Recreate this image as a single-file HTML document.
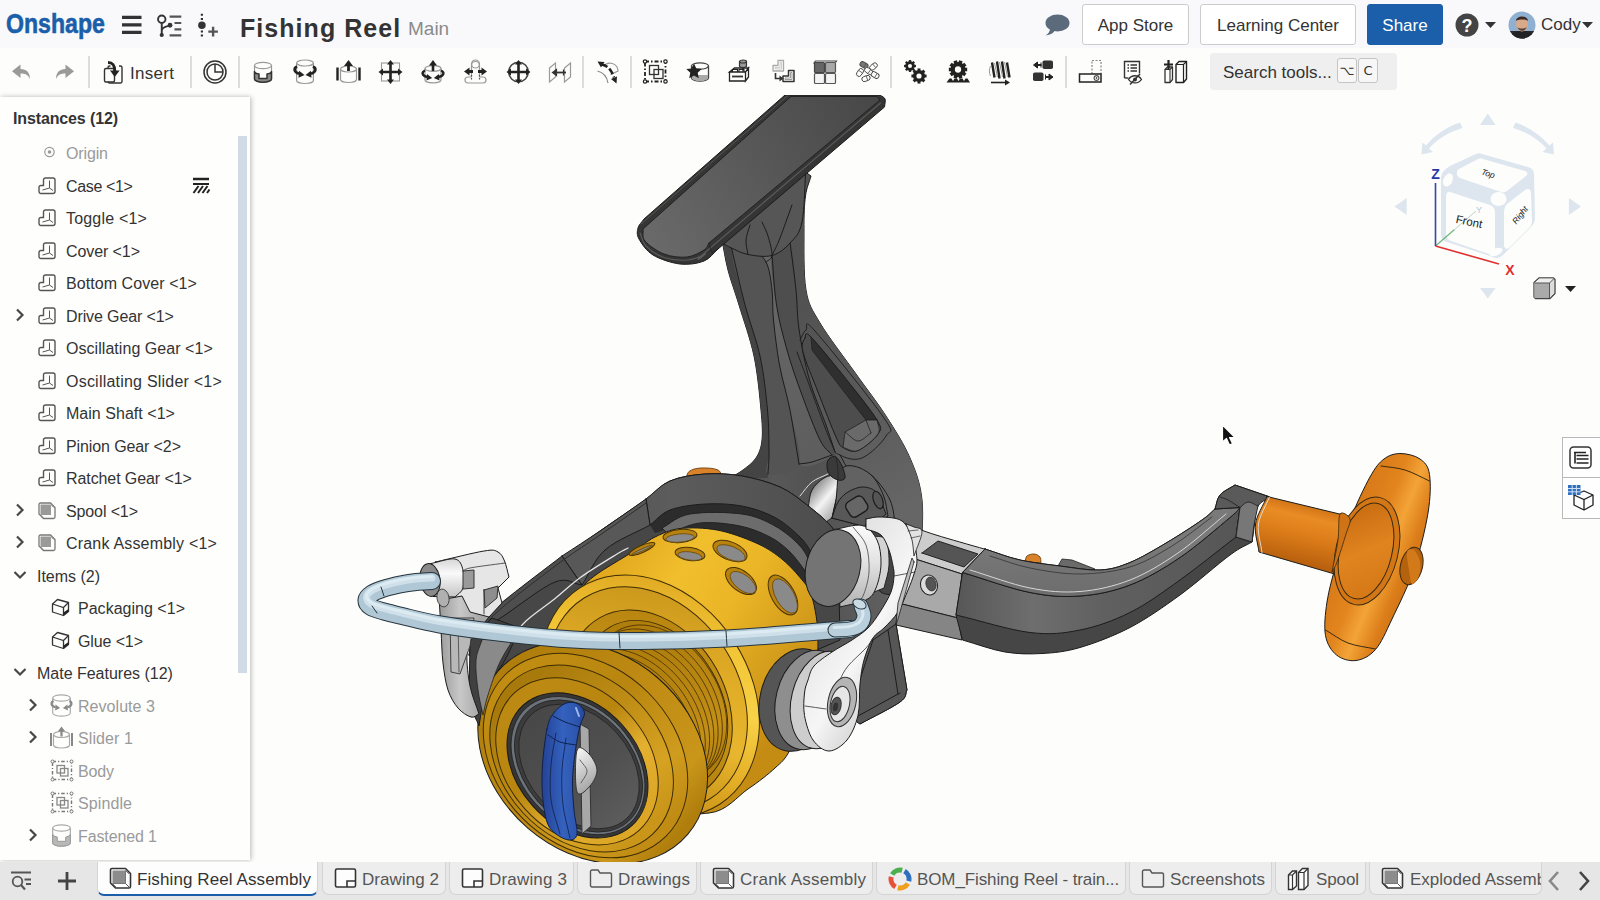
<!DOCTYPE html>
<html lang="en">
<head>
<meta charset="utf-8">
<title>Fishing Reel | Onshape</title>
<style>
*{box-sizing:border-box;margin:0;padding:0}
html,body{width:1600px;height:900px;overflow:hidden;background:#fdfdfb;font-family:"Liberation Sans",sans-serif;color:#333}
.abs{position:absolute}
#top{position:absolute;left:0;top:0;width:1600px;height:48px;background:#f9f9fb}
#tools{position:absolute;left:0;top:48px;width:1600px;height:47px;background:#fdfdfc}
#view{position:absolute;left:0;top:95px;width:1600px;height:767px;background:#fdfdfb;overflow:hidden}
#panel{position:absolute;left:0;top:97px;width:250px;height:763px;background:#fefefd;box-shadow:1px 0 5px rgba(0,0,0,.28);overflow:hidden}
#tabs{position:absolute;left:0;top:862px;width:1600px;height:38px;background:#e6e6e6}
.logo{position:absolute;left:6px;top:6px;font-size:28px;font-weight:bold;color:#1b5faa;letter-spacing:0;transform:scaleX(.825);transform-origin:0 0;line-height:36px;-webkit-text-stroke:.6px #1b5faa}
.title{position:absolute;left:240px;top:10px;font-size:25px;font-weight:bold;color:#333;line-height:36px;letter-spacing:1.05px;white-space:nowrap}
.branch{position:absolute;left:408px;top:15px;font-size:19px;color:#8a8a8a;line-height:28px}
.btn{position:absolute;top:4px;height:41px;border:1px solid #ccc;border-radius:3px;background:#fff;font-size:17px;line-height:41px;text-align:center;color:#333}
.btn.share{background:#1b5faa;border-color:#1b5faa;color:#fff}
.sep{position:absolute;top:8px;width:2px;height:32px;background:#dcdcdc}
.ti{position:absolute;top:58px;width:28px;height:28px}
.row{position:absolute;left:0;height:32px;line-height:32px;font-size:16px;color:#333;white-space:nowrap}
.row.dim{color:#9a9a9a}
.tab{position:absolute;top:863px;height:33px;background:#ededed;border:1px solid #d4d4d4;border-top:none;border-radius:0 0 7px 7px;font-size:17px;line-height:35px;color:#555;white-space:nowrap;overflow:hidden}
.tab.act{background:#fdfdfd;color:#333;border-bottom:2px solid #1b5faa;height:34px}
.tab span{position:absolute;top:0}
#tabitems{position:absolute;left:0;top:862px;width:1600px;height:38px}
#tabitems .tab{top:0}
#tabitems svg.abs{position:absolute}
.kbd{top:10px;width:20px;height:25px;border:1px solid #c4c4c4;border-radius:3px;background:#f7f7f7;font-size:13px;line-height:24px;text-align:center;color:#333;font-family:"DejaVu Sans","Liberation Sans",sans-serif}
</style>
</head>
<body>
<div id="view"><svg width="1600" height="900" viewBox="0 0 1600 900" style="position:absolute;left:0;top:-95px"><defs><linearGradient id="gFoot" gradientUnits="userSpaceOnUse" x1="650" y1="250" x2="880" y2="100"><stop offset="0" stop-color="#6a6a6a"/><stop offset="0.5" stop-color="#585858"/><stop offset="1" stop-color="#474747"/></linearGradient><linearGradient id="gStem" gradientUnits="userSpaceOnUse" x1="730" y1="0" x2="900" y2="0"><stop offset="0" stop-color="#444"/><stop offset="0.25" stop-color="#585858"/><stop offset="0.5" stop-color="#525252"/><stop offset="1" stop-color="#626262"/></linearGradient><linearGradient id="gArmTop" gradientUnits="userSpaceOnUse" x1="0" y1="540" x2="0" y2="600"><stop offset="0" stop-color="#7a7a7a"/><stop offset="1" stop-color="#6c6c6c"/></linearGradient><linearGradient id="gArmFront" gradientUnits="userSpaceOnUse" x1="960" y1="0" x2="1250" y2="0"><stop offset="0" stop-color="#585858"/><stop offset="0.25" stop-color="#6e6e6e"/><stop offset="0.5" stop-color="#606060"/><stop offset="1" stop-color="#555"/></linearGradient><linearGradient id="gOrCyl" gradientUnits="userSpaceOnUse" x1="1300" y1="500" x2="1286" y2="560"><stop offset="0" stop-color="#c86c12"/><stop offset="0.25" stop-color="#ea8c24"/><stop offset="0.6" stop-color="#d97a18"/><stop offset="1" stop-color="#b9600e"/></linearGradient><linearGradient id="gKnob" gradientUnits="userSpaceOnUse" x1="1330" y1="520" x2="1430" y2="560"><stop offset="0" stop-color="#cf7214"/><stop offset="0.45" stop-color="#e2851e"/><stop offset="0.62" stop-color="#f3a437"/><stop offset="0.8" stop-color="#dc7e1a"/><stop offset="1" stop-color="#c56a10"/></linearGradient><linearGradient id="gFacetMid" gradientUnits="userSpaceOnUse" x1="760" y1="300" x2="800" y2="460"><stop offset="0" stop-color="#666"/><stop offset="1" stop-color="#5e5e5e"/></linearGradient><linearGradient id="gFacetR" gradientUnits="userSpaceOnUse" x1="800" y1="300" x2="920" y2="500"><stop offset="0" stop-color="#525252"/><stop offset="0.6" stop-color="#5c5c5c"/><stop offset="1" stop-color="#666"/></linearGradient><linearGradient id="gBulge" gradientUnits="userSpaceOnUse" x1="810" y1="490" x2="840" y2="515"><stop offset="0" stop-color="#8a8a8a"/><stop offset="0.45" stop-color="#f4f4f4"/><stop offset="1" stop-color="#9a9a9a"/></linearGradient><linearGradient id="gKn2" gradientUnits="userSpaceOnUse" x1="1345" y1="520" x2="1390" y2="580"><stop offset="0" stop-color="#cc7014"/><stop offset="0.5" stop-color="#e08420"/><stop offset="1" stop-color="#d67a18"/></linearGradient><linearGradient id="gRim" gradientUnits="userSpaceOnUse" x1="560" y1="0" x2="840" y2="0"><stop offset="0" stop-color="#505050"/><stop offset="0.4" stop-color="#5c5c5c"/><stop offset="1" stop-color="#4c4c4c"/></linearGradient><linearGradient id="gSkirt" gradientUnits="userSpaceOnUse" x1="600" y1="560" x2="800" y2="700"><stop offset="0" stop-color="#e0a51c"/><stop offset="0.3" stop-color="#f1bf2e"/><stop offset="0.55" stop-color="#eab526"/><stop offset="1" stop-color="#c58c14"/></linearGradient><linearGradient id="gGroove" gradientUnits="userSpaceOnUse" x1="620" y1="640" x2="740" y2="740"><stop offset="0" stop-color="#b07e0c"/><stop offset="0.5" stop-color="#c39018"/><stop offset="1" stop-color="#9e6e06"/></linearGradient><linearGradient id="gRimA" gradientUnits="userSpaceOnUse" x1="560" y1="580" x2="770" y2="760"><stop offset="0" stop-color="#d9a01c"/><stop offset="0.3" stop-color="#f2c435"/><stop offset="0.55" stop-color="#f8d248"/><stop offset="0.8" stop-color="#e2ac24"/><stop offset="1" stop-color="#bd8612"/></linearGradient><linearGradient id="gFaceB" gradientUnits="userSpaceOnUse" x1="560" y1="600" x2="750" y2="760"><stop offset="0" stop-color="#c8941a"/><stop offset="0.4" stop-color="#e0ac26"/><stop offset="0.7" stop-color="#e8b62e"/><stop offset="1" stop-color="#c08a12"/></linearGradient><linearGradient id="gFaceC" gradientUnits="userSpaceOnUse" x1="580" y1="620" x2="735" y2="770"><stop offset="0" stop-color="#b5820e"/><stop offset="0.5" stop-color="#c9961a"/><stop offset="1" stop-color="#a87608"/></linearGradient><linearGradient id="gF0" gradientUnits="userSpaceOnUse" x1="480" y1="0" x2="710" y2="0"><stop offset="0" stop-color="#b07e0c"/><stop offset="0.5" stop-color="#c08c14"/><stop offset="0.85" stop-color="#c9961a"/><stop offset="1" stop-color="#b07e0c"/></linearGradient><linearGradient id="gF1" gradientUnits="userSpaceOnUse" x1="484" y1="0" x2="690" y2="0"><stop offset="0" stop-color="#c08c12"/><stop offset="0.4" stop-color="#b8860f"/><stop offset="0.8" stop-color="#d09c1e"/><stop offset="1" stop-color="#c08c14"/></linearGradient><linearGradient id="gF2" gradientUnits="userSpaceOnUse" x1="490" y1="0" x2="675" y2="0"><stop offset="0" stop-color="#a87a0c"/><stop offset="0.45" stop-color="#c08e16"/><stop offset="0.8" stop-color="#d6a222"/><stop offset="1" stop-color="#c9961a"/></linearGradient><linearGradient id="gF3" gradientUnits="userSpaceOnUse" x1="497" y1="0" x2="658" y2="0"><stop offset="0" stop-color="#bc8a12"/><stop offset="0.4" stop-color="#b8860f"/><stop offset="0.7" stop-color="#e4b030"/><stop offset="1" stop-color="#dca626"/></linearGradient><linearGradient id="gDisc" gradientUnits="userSpaceOnUse" x1="510" y1="0" x2="650" y2="0"><stop offset="0" stop-color="#484848"/><stop offset="0.6" stop-color="#505050"/><stop offset="1" stop-color="#5c5c5c"/></linearGradient><linearGradient id="gBlue" gradientUnits="userSpaceOnUse" x1="545" y1="0" x2="585" y2="0"><stop offset="0" stop-color="#26469a"/><stop offset="0.45" stop-color="#3462be"/><stop offset="0.8" stop-color="#2d55ae"/><stop offset="1" stop-color="#24449a"/></linearGradient><linearGradient id="gWing" gradientUnits="userSpaceOnUse" x1="575" y1="755" x2="598" y2="785"><stop offset="0" stop-color="#f0f0f0"/><stop offset="1" stop-color="#a0a0a0"/></linearGradient><linearGradient id="gLArm" gradientUnits="userSpaceOnUse" x1="440" y1="0" x2="480" y2="0"><stop offset="0" stop-color="#9c9c9c"/><stop offset="0.5" stop-color="#c8c8c8"/><stop offset="1" stop-color="#a8a8a8"/></linearGradient><linearGradient id="gNub" gradientUnits="userSpaceOnUse" x1="0" y1="560" x2="0" y2="598"><stop offset="0" stop-color="#d8d8d8"/><stop offset="0.35" stop-color="#fafafa"/><stop offset="1" stop-color="#c2c2c2"/></linearGradient><linearGradient id="gRArm" gradientUnits="userSpaceOnUse" x1="800" y1="640" x2="900" y2="700"><stop offset="0" stop-color="#e4e4e4"/><stop offset="0.5" stop-color="#f6f6f6"/><stop offset="1" stop-color="#c8c8c8"/></linearGradient><linearGradient id="gRoll" gradientUnits="userSpaceOnUse" x1="0" y1="525" x2="0" y2="605"><stop offset="0" stop-color="#fbfbfb"/><stop offset="0.45" stop-color="#e4e4e4"/><stop offset="1" stop-color="#b4b4b4"/></linearGradient></defs><path d="M722 240.0C724 250 725.2 259.2 728 270.0C730.8 280.8 734.7 290.7 739 305.0C743.3 319.3 750.3 338.5 754 356.0C757.7 373.5 759.7 396 761 410.0C762.3 424 762.8 432 762 440.0C761.2 448 759.2 453 756 458.0C752.8 463 747.3 466.7 743 470.0C738.7 473.3 734.3 475.3 730 478.0L700 520.0L760 640.0L860 724.0C873.3 716.7 892.2 707.7 900 702.0C907.8 696.3 904.7 694 907 690.0L896 624.0L921 560.0C921.3 540 923.8 517 922 500.0C920.2 483 916 472 910 458.0C904 444 895 430 886 416.0C877 402 867 389.5 856 374.0C845 358.5 828.3 337 820 323.0C811.7 309 808.7 305.5 806 290.0C803.3 274.5 804.1 245.7 804 230.0C803.9 214.3 804.3 205 805.5 196.0C806.7 187 809.2 182.7 811 176.0L800 168.0L722 240.0Z" fill="url(#gStem)" stroke="#1c1c1c" stroke-width="1" stroke-linejoin="round" stroke-linecap="round" />
<path d="M790 242.0C788.5 262 794.5 275.5 796 290.0C797.5 304.5 796.8 314 799 329.0C801.2 344 805 364 809.5 380.0C814 396 821.8 413 826 425.0C830.2 437 832.7 444.5 835 452.0C837.3 459.5 838.3 464 840 470.0L896 624.0L921 560.0C921.3 540 923.8 517 922 500.0C920.2 483 916 472 910 458.0C904 444 895 430 886 416.0C877 402 867 389.5 856 374.0C845 358.5 828.3 337 820 323.0C811.7 309 808.7 305.5 806 290.0C803.3 274.5 804.2 250 804 230.0C803.8 210 807.3 168 805 170.0C802.7 172 791.5 222 790 242.0Z" fill="url(#gFacetR)" stroke="none" stroke-width="0" stroke-linejoin="round" stroke-linecap="round" />
<path d="M748 243.5C747 244.6 762 254.2 766 262.0C770 269.8 770.8 280.3 772 290.0C773.2 299.7 772.2 307.5 773.5 320.0C774.8 332.5 776.8 350 779.5 365.0C782.2 380 786.8 393.5 790 410.0C793.2 426.5 792 456.5 799 464.0C806 471.5 828.5 459 832 455.0C835.5 451 825 450 820 440.0C815 430 807.5 410 802 395.0C796.5 380 791.2 365 787 350.0C782.8 335 779 320.8 776.5 305.0C774 289.2 776.8 265.8 772 255.5C767.2 245.2 749 242.4 748 243.5Z" fill="url(#gFacetMid)" stroke="none" stroke-width="0" stroke-linejoin="round" stroke-linecap="round" />
<path d="M722 240.0C724 250 725.2 259.2 728 270.0C730.8 280.8 734.7 290.7 739 305.0C743.3 319.3 750.3 338.5 754 356.0C757.7 373.5 759.7 396 761 410.0C762.3 424 762.8 432 762 440.0C761.2 448 759.2 453 756 458.0C752.8 463 747.3 466.7 743 470.0C738.7 473.3 734.3 475.3 730 478.0L768 478.0C768 476.7 767.8 478.3 768 474.0C768.2 469.7 769.1 462.7 769 452.0C768.9 441.3 769 426 767.5 410.0C766 394 763.8 373.5 760 356.0C756.2 338.5 749.8 323 745 305.0C740.2 287 735.3 258.8 731.5 248.0C727.7 237.2 725.2 242.7 722 240.0Z" fill="#444" stroke="none" stroke-width="0" stroke-linejoin="round" stroke-linecap="round" />
<path d="M731.5 248.0C731 258.2 740.2 287 745 305.0C749.8 323 756.2 338.5 760 356.0C763.8 373.5 766 394 767.5 410.0C769 426 768.9 441.3 769 452.0C769.1 462.7 763 472 768 474.0C773 476 795.3 474.7 799 464.0C802.7 453.3 793.2 426.5 790 410.0C786.8 393.5 782.2 380 779.5 365.0C776.8 350 774.8 332.5 773.5 320.0C772.2 307.5 773.2 299.7 772 290.0C770.8 280.3 770 269.8 766 262.0C762 254.2 753.8 245.8 748 243.5C742.2 241.2 732 237.8 731.5 248.0Z" fill="#545454" stroke="none" stroke-width="0" stroke-linejoin="round" stroke-linecap="round" />
<path d="M772 255.5C769.8 266 774 289.2 776.5 305.0C779 320.8 782.8 335 787 350.0C791.2 365 796.5 380 802 395.0C807.5 410 815 430 820 440.0C825 450 829.5 453 832 455.0C834.5 457 836 457 835 452.0C834 447 830.2 437 826 425.0C821.8 413 814 396 809.5 380.0C805 364 801.2 344 799 329.0C796.8 314 797.5 304.5 796 290.0C794.5 275.5 794 247.8 790 242.0C786 236.2 774.2 245 772 255.5Z" fill="#4e4e4e" stroke="none" stroke-width="0" stroke-linejoin="round" stroke-linecap="round" />
<path d="M731.5 248.0C736 267 740.2 287 745 305.0C749.8 323 756.2 338.5 760 356.0C763.8 373.5 766 394 767.5 410.0C769 426 768.9 441.3 769 452.0C769.1 462.7 768.3 466.7 768 474.0" fill="none" stroke="#1c1c1c" stroke-width="1" stroke-linejoin="round" stroke-linecap="round" />
<path d="M748 243.5C754 249.7 762 254.2 766 262.0C770 269.8 770.8 280.3 772 290.0C773.2 299.7 772.2 307.5 773.5 320.0C774.8 332.5 776.8 350 779.5 365.0C782.2 380 786.8 393.5 790 410.0C793.2 426.5 796 446 799 464.0" fill="none" stroke="#1c1c1c" stroke-width="1" stroke-linejoin="round" stroke-linecap="round" />
<path d="M772 255.5C773.5 272 774 289.2 776.5 305.0C779 320.8 782.8 335 787 350.0C791.2 365 796.5 380 802 395.0C807.5 410 815 430 820 440.0C825 450 828 450 832 455.0" fill="none" stroke="#1c1c1c" stroke-width="1" stroke-linejoin="round" stroke-linecap="round" />
<path d="M790 242.0C792 258 794.5 275.5 796 290.0C797.5 304.5 796.8 314 799 329.0C801.2 344 805 364 809.5 380.0C814 396 821.8 413 826 425.0C830.2 437 832 443 835 452.0" fill="none" stroke="#1c1c1c" stroke-width="1" stroke-linejoin="round" stroke-linecap="round" />
<path d="M722 243.0C725.2 244.7 727.2 246.1 731.5 248.0C735.8 249.9 741.2 253.2 748 254.5C754.8 255.8 765 257.4 772 255.5C779 253.6 785 248.6 790 243.0C795 237.4 799.3 235 802 222.0C804.7 209 804.7 184 806 165.0L716 240.0L722 243.0Z" fill="#565656" stroke="#1c1c1c" stroke-width="1" stroke-linejoin="round" stroke-linecap="round" />
<path d="M748 254.5C747.3 249.7 745.7 244.9 746 240.0C746.3 235.1 748.7 230 750 225.0" fill="none" stroke="#1c1c1c" stroke-width="1" stroke-linejoin="round" stroke-linecap="round" />
<path d="M766 262.0C768 259.8 771.7 259.8 772 255.5C772.3 251.2 769.7 241.6 768 236.0C766.3 230.4 764 226.7 762 222.0" fill="none" stroke="#1c1c1c" stroke-width="1" stroke-linejoin="round" stroke-linecap="round" />
<path d="M772 255.5C774.7 249.7 776.7 246.4 780 238.0C783.3 229.6 788 216 792 205.0" fill="none" stroke="#1c1c1c" stroke-width="1" stroke-linejoin="round" stroke-linecap="round" />
<path d="M805 338.0C806.3 335.5 804.2 330.2 811 337.0C817.8 343.8 835 365.2 846 379.0C857 392.8 871.7 410.8 877 420.0C882.3 429.2 881.2 428.9 878 434.0C874.8 439.1 863.8 448.2 858 450.5C852.2 452.8 846.7 449.8 843 447.5C839.3 445.2 840.2 446.2 836 437.0C831.8 427.8 823.5 406.2 818 392.0C812.5 377.8 805.2 361 803 352.0C800.8 343 803.7 340.5 805 338.0Z" fill="#4d4d4d" stroke="#1c1c1c" stroke-width="1" stroke-linejoin="round" stroke-linecap="round" />
<path d="M811 337.0C822.7 351 835 365.2 846 379.0C857 392.8 866.7 406.3 877 420.0L866 420.0C856.7 408 847 395.7 838 384.0C829 372.3 820.7 361.3 812 350.0L811 337.0Z" fill="#2f2f2f" stroke="#222" stroke-width="0.8" stroke-linejoin="round" stroke-linecap="round" />
<path d="M877 420.0C877.3 424.7 881.2 428.9 878 434.0C874.8 439.1 863.8 448.2 858 450.5C852.2 452.8 848 448.5 843 447.5L845 432.0L866 420.0L877 420.0Z" fill="#6a6a6a" stroke="#222" stroke-width="0.8" stroke-linejoin="round" stroke-linecap="round" />
<path d="M845 432.0C849.3 435 853.7 440.8 858 441.0C862.3 441.2 866.7 435.7 871 433.0" fill="none" stroke="#222" stroke-width="0.8" stroke-linejoin="round" stroke-linecap="round" />
<path d="M866 420.0C867.7 424.3 869.3 428.7 871 433.0" fill="none" stroke="#222" stroke-width="0.8" stroke-linejoin="round" stroke-linecap="round" />
<path d="M800 340.0C802 336.7 803.5 331.5 806 330.0C808.5 328.5 802 316.3 815 331.0C828 345.7 872.2 400.5 884 418.0C895.8 435.5 889.7 429.3 886 436.0C882.3 442.7 869.7 454.8 862 458.0C854.3 461.2 845.3 458 840 455.0C834.7 452 837.2 457.2 830 440.0C822.8 422.8 808 381.3 797 352.0" fill="none" stroke="#1c1c1c" stroke-width="0.9" stroke-linejoin="round" stroke-linecap="round" />
<path d="M799 464.0C803.3 463.3 806.5 463.5 812 462.0C817.5 460.5 825.3 457.3 832 455.0" fill="none" stroke="#1c1c1c" stroke-width="1" stroke-linejoin="round" stroke-linecap="round" />
<path d="M840 455.0C843.3 460 845 466.8 850 470.0C855 473.2 863.3 469 870 474.0C876.7 479 885.7 490.7 890 500.0C894.3 509.3 894 520 896 530.0" fill="none" stroke="#1c1c1c" stroke-width="1" stroke-linejoin="round" stroke-linecap="round" />
<path d="M808 508.0C809.3 502 809.3 495 812 490.0C814.7 485 819.7 480.7 824 478.0C828.3 475.3 833.3 475.3 838 474.0C839.3 476.7 842.3 477.7 842 482.0C841.7 486.3 837.7 494 836 500.0C834.3 506 833.3 512 832 518.0C828.7 519.3 826 523.7 822 522.0C818 520.3 812.7 512.7 808 508.0Z" fill="url(#gBulge)" stroke="#1c1c1c" stroke-width="1" stroke-linejoin="round" stroke-linecap="round" />
<path d="M838 474.0C840.7 471.3 842.3 467 846 466.0C849.7 465 855.3 466 860 468.0C864.7 470 870 473.2 874 478.0C878 482.8 881.7 490.7 884 497.0C886.3 503.3 886.7 509.7 888 516.0L870 528.0L832 518.0C833.3 512 835 507.3 836 500.0C837 492.7 837.3 482.7 838 474.0Z" fill="#626262" stroke="#1c1c1c" stroke-width="1" stroke-linejoin="round" stroke-linecap="round" />
<path d="M832 518.0C834 512.7 835.3 506.3 838 502.0C840.7 497.7 843.8 494.5 848 492.0C852.2 489.5 858.2 486.8 863 487.0C867.8 487.2 873.2 488.5 877 493.0C880.8 497.5 883 507 886 514.0L870 528.0L832 518.0Z" fill="#585858" stroke="#1c1c1c" stroke-width="1" stroke-linejoin="round" stroke-linecap="round" />
<rect x="847" y="498" width="20" height="17" rx="5" transform="rotate(-32 857 507)" fill="#666" stroke="#1c1c1c" stroke-width="1.4"/>
<ellipse cx="878" cy="500" rx="4.5" ry="9" transform="rotate(-20 878 500)" fill="#555" stroke="#1c1c1c" stroke-width="1.2" />
<path d="M830 458.0C831.5 456.8 834 455.7 836 457.0C838 458.3 840.5 462.5 842 466.0C843.5 469.5 845.7 475.7 845 478.0C844.3 480.3 840.7 480.7 838 480.0C835.3 479.3 830.8 476.7 829 474.0C827.2 471.3 826.8 466.7 827 464.0C827.2 461.3 828.5 459.2 830 458.0Z" fill="#3a3a3a" stroke="#1c1c1c" stroke-width="1" stroke-linejoin="round" stroke-linecap="round" />
<path d="M836 457.0C836.7 461.3 837.7 466.2 838 470.0C838.3 473.8 838 476.7 838 480.0" fill="none" stroke="#222" stroke-width="0.8" stroke-linejoin="round" stroke-linecap="round" />
<path d="M800 496.0C804 491.3 807.3 485.7 812 482.0C816.7 478.3 822.7 476.7 828 474.0" fill="none" stroke="#ddd" stroke-width="1" stroke-linejoin="round" stroke-linecap="round" />
<path d="M873 640.0L896 624.0L907 690.0C904.7 694 907.8 696.3 900 702.0C892.2 707.7 873.3 716.7 860 724.0L848 716.0L873 640.0Z" fill="#565656" stroke="#1c1c1c" stroke-width="1" stroke-linejoin="round" stroke-linecap="round" />
<path d="M888 630.0C891.3 651.3 894.7 672.7 898 694.0" fill="none" stroke="#1c1c1c" stroke-width="1" stroke-linejoin="round" stroke-linecap="round" />
<path d="M858 716.0C872 708.3 886 700.7 900 693.0" fill="none" stroke="#1c1c1c" stroke-width="1" stroke-linejoin="round" stroke-linecap="round" />
<path d="M785 95.0L880 95.0C881.7 96.3 884.2 97 885 99.0C885.8 101 884.7 104.3 884.5 107.0L718 249.0C713.3 253 710.3 258.5 704 261.0C697.7 263.5 688.5 265 680 264.0C671.5 263 659.8 259.2 653 255.0C646.2 250.8 641.5 243.5 639 239.0C636.5 234.5 637.2 231.3 638 228.0C638.8 224.7 642 222 644 219.0L785 95.0Z" fill="#353535" stroke="#1c1c1c" stroke-width="1" stroke-linejoin="round" stroke-linecap="round" />
<path d="M791 96.5L877 96.5L880 100.0L709 243.0C707.3 245.3 707.7 247.7 704 250.0C700.3 252.3 693.7 256.3 687 257.0C680.3 257.7 671 256.7 664 254.0C657 251.3 648.5 245.2 645 241.0C641.5 236.8 643.7 233 643 229.0L791 96.5Z" fill="url(#gFoot)" stroke="#222" stroke-width="1" stroke-linejoin="round" stroke-linecap="round" />
<path d="M641 224.0C690 181.2 739 138.3 788 95.5" fill="none" stroke="#555" stroke-width="1" stroke-linejoin="round" stroke-linecap="round" />
<path d="M880.5 103.0C824.3 150.8 741.2 221.3 712 246.5C682.8 271.7 709 251.8 705 254.0C701 256.2 694.8 259.4 688 260.0C681.2 260.6 671 259.8 664 257.5C657 255.2 650 250.1 646 246.0C642 241.9 642 237.3 640 233.0" fill="none" stroke="#5a5a5a" stroke-width="1.2" stroke-linejoin="round" stroke-linecap="round" />
<path d="M709 243.0C710 246 710.5 251 712 252.0C713.5 253 716 250 718 249.0" fill="none" stroke="#222" stroke-width="0.8" stroke-linejoin="round" stroke-linecap="round" />
<path d="M905 524.0C915.3 527.7 922.5 530.8 936 535.0C949.5 539.2 969.3 544.7 986 549.5L962 574.0L912 558.0L905 524.0Z" fill="#cdcdcd" stroke="#1c1c1c" stroke-width="1" stroke-linejoin="round" stroke-linecap="round" />
<path d="M922 553.0L938 541.0L978 554.0L964 567.0L922 553.0Z" fill="#555" stroke="#222" stroke-width="1" stroke-linejoin="round" stroke-linecap="round" />
<path d="M912 558.0L962 574.0L958 618.0L898 603.0L912 558.0Z" fill="#a9a9a9" stroke="#1c1c1c" stroke-width="1" stroke-linejoin="round" stroke-linecap="round" />
<path d="M898 603.0L958 618.0L962 640.0L896 625.0L898 603.0Z" fill="#858585" stroke="#1c1c1c" stroke-width="1" stroke-linejoin="round" stroke-linecap="round" />
<ellipse cx="929" cy="585" rx="8.5" ry="10" transform="rotate(-15 929 585)" fill="#dcdcdc" stroke="#222" stroke-width="1" />
<ellipse cx="931" cy="584" rx="5" ry="7" transform="rotate(-15 931 584)" fill="#555" stroke="#333" stroke-width="0.8" />
<path d="M1025 562.0C1025.7 560 1025.5 557.3 1027 556.0C1028.5 554.7 1031.8 553.8 1034 554.0C1036.2 554.2 1038.8 555.5 1040 557.0C1041.2 558.5 1040.7 561 1041 563.0L1025 562.0Z" fill="#d9822a" stroke="#5a3206" stroke-width="0.8" stroke-linejoin="round" stroke-linecap="round" />
<path d="M1058 566.0L1062 559.0L1072 560.0L1095 569.0L1092 571.0L1058 566.0Z" fill="#6a6a6a" stroke="#222" stroke-width="0.8" stroke-linejoin="round" stroke-linecap="round" />
<path d="M985 549.0C996.7 552.7 1007.5 557.2 1020 560.0C1032.5 562.8 1046.7 564.3 1060 566.0C1073.3 567.7 1088.3 570.6 1100 570.0C1111.7 569.4 1118.8 567.1 1130 562.5C1141.2 557.9 1155 549.6 1167 542.5C1179 535.4 1194 525.6 1202 520.0C1210 514.4 1210.7 512.7 1215 509.0C1216.7 504.3 1216.7 499 1220 495.0C1223.3 491 1230 488.3 1235 485.0L1270 497.0C1266 499.7 1261 497.5 1258 505.0C1255 512.5 1254 529.7 1252 542.0C1244.7 546.3 1242 546.2 1230 555.0C1218 563.8 1196.7 582.9 1180 595.0C1163.3 607.1 1146.7 618.8 1130 627.5C1113.3 636.2 1094.7 643.2 1080 647.5C1065.3 651.8 1054.5 652.8 1042 653.5C1029.5 654.2 1018.2 654.2 1005 652.0C991.8 649.8 976.7 644 962.5 640.0L956 615.0L962.5 572.5L985 549.0Z" fill="#464646" stroke="#1c1c1c" stroke-width="1" stroke-linejoin="round" stroke-linecap="round" />
<path d="M962.5 572.5C985 579.2 1010.4 588.6 1030 592.5C1049.6 596.4 1063.3 597.2 1080 596.0C1096.7 594.8 1113.3 591.4 1130 585.0C1146.7 578.6 1163.3 568.8 1180 557.5C1196.7 546.2 1220 525.8 1230 517.5C1240 509.2 1236.7 510.8 1240 507.5L1236 537.0C1217.3 551.3 1197.7 567.4 1180 580.0C1162.3 592.6 1146.7 604.2 1130 612.5C1113.3 620.8 1096.7 626.7 1080 630.0C1063.3 633.3 1050.7 635 1030 632.5C1009.3 630 980.7 620.8 956 615.0L962.5 572.5Z" fill="url(#gArmFront)" stroke="#1c1c1c" stroke-width="1" stroke-linejoin="round" stroke-linecap="round" />
<path d="M985 549.0C996.7 552.7 1007.5 557.2 1020 560.0C1032.5 562.8 1046.7 564.3 1060 566.0C1073.3 567.7 1088.3 570.6 1100 570.0C1111.7 569.4 1118.8 567.1 1130 562.5C1141.2 557.9 1155 549.6 1167 542.5C1179 535.4 1194 525.6 1202 520.0C1210 514.4 1210.7 512.7 1215 509.0L1240 507.5C1236.7 510.8 1240 509.2 1230 517.5C1220 525.8 1196.7 546.2 1180 557.5C1163.3 568.8 1146.7 578.6 1130 585.0C1113.3 591.4 1096.7 594.8 1080 596.0C1063.3 597.2 1049.6 596.4 1030 592.5C1010.4 588.6 985 579.2 962.5 572.5L985 549.0Z" fill="url(#gArmTop)" stroke="#1c1c1c" stroke-width="1" stroke-linejoin="round" stroke-linecap="round" />
<path d="M970 570.0C990 576 1011.7 584.4 1030 588.0C1048.3 591.6 1063.3 592.8 1080 591.5C1096.7 590.2 1113.7 586.4 1130 580.0C1146.3 573.6 1162 564 1178 553.0C1194 542 1210 527 1226 514.0" fill="none" stroke="#d8d8d8" stroke-width="1" stroke-linejoin="round" stroke-linecap="round" />
<path d="M990 556.0C1003.3 560 1015 565 1030 568.0C1045 571 1063.3 574.2 1080 574.0C1096.7 573.8 1114.7 571.7 1130 567.0C1145.3 562.3 1158.3 554.3 1172 546.0C1185.7 537.7 1198.7 526.7 1212 517.0" fill="none" stroke="#333" stroke-width="0.8" stroke-linejoin="round" stroke-linecap="round" />
<path d="M1215 509.0C1216.7 504.3 1216.7 499 1220 495.0C1223.3 491 1230 488.3 1235 485.0L1270 497.0C1266 500 1260.7 501.3 1258 506.0C1255.3 510.7 1255 519 1254 525.0C1253 531 1252.7 536.3 1252 542.0L1236 537.0L1240 507.5L1215 509.0Z" fill="#5a5a5a" stroke="#1c1c1c" stroke-width="1" stroke-linejoin="round" stroke-linecap="round" />
<path d="M1240 507.5C1242.7 505.7 1245 502.2 1248 502.0C1251 501.8 1254.7 504.7 1258 506.0C1256.7 512.3 1255 519 1254 525.0C1253 531 1252.7 536.3 1252 542.0L1236 537.0L1240 507.5Z" fill="#777" stroke="#1c1c1c" stroke-width="0.8" stroke-linejoin="round" stroke-linecap="round" />
<path d="M1220 497.0C1222.7 498 1224.7 498.2 1228 500.0C1231.3 501.8 1236 505 1240 507.5" fill="none" stroke="#1c1c1c" stroke-width="0.8" stroke-linejoin="round" stroke-linecap="round" />
<path d="M1267 496.5L1352 517.0L1338 575.0L1259 552.0C1257.8 542.7 1254.2 533.2 1255.5 524.0C1256.8 514.8 1263.2 505.7 1267 496.5Z" fill="url(#gOrCyl)" stroke="#1c1c1c" stroke-width="1" stroke-linejoin="round" stroke-linecap="round" />
<path d="M1269.5 497.0C1265.8 506 1259.8 514.8 1258.5 524.0C1257.2 533.2 1260.8 543 1262 552.5" fill="none" stroke="#ddd" stroke-width="1" stroke-linejoin="round" stroke-linecap="round" />
<path d="M1400.5 453.5C1406.5 453.5 1415.2 455.5 1420 459.0C1424.8 462.5 1428.2 465.5 1429.5 474.5C1430.8 483.5 1430.6 497.2 1428 513.0C1425.4 528.8 1420 551.3 1414 569.0C1408 586.7 1398.4 605.6 1392 619.0C1385.6 632.4 1381.5 642.6 1375.5 649.5C1369.5 656.4 1362.5 659.6 1356 660.5C1349.5 661.4 1341.6 659.2 1336.5 655.0C1331.4 650.8 1327.1 644.3 1325.5 635.5C1323.9 626.7 1325.2 614.1 1327 602.0C1328.8 589.9 1332.6 576.8 1336.5 563.0C1340.4 549.2 1344.9 533.3 1350.5 519.0C1356.1 504.7 1364.4 487 1370 477.0C1375.6 467 1378.9 462.9 1384 459.0C1389.1 455.1 1394.5 453.5 1400.5 453.5Z" fill="url(#gKnob)" stroke="#1c1c1c" stroke-width="1" stroke-linejoin="round" stroke-linecap="round" />
<ellipse cx="1367" cy="551" rx="31" ry="55" transform="rotate(14 1367 551)" fill="#d27616" stroke="#3a2a10" stroke-width="1" />
<ellipse cx="1366" cy="551" rx="26" ry="49" transform="rotate(14 1366 551)" fill="url(#gKn2)" stroke="#3a2a10" stroke-width="1" />
<ellipse cx="1411.5" cy="566" rx="11" ry="19" transform="rotate(14 1411.5 566)" fill="#b5620f" stroke="#3a2a10" stroke-width="1" />
<path d="M1407 552.0C1407.8 548.7 1411.8 548.3 1414 550.0C1416.2 551.7 1419.2 557.7 1420 562.0C1420.8 566.3 1420.3 572.3 1419 576.0C1417.7 579.7 1413.7 585 1412 584.0C1410.3 583 1409.8 575.3 1409 570.0C1408.2 564.7 1406.2 555.3 1407 552.0Z" fill="#d27a1a" stroke="none" stroke-width="0" stroke-linejoin="round" stroke-linecap="round" />
<path d="M1381 466.0C1389 467.3 1396.9 467.5 1405 470.0C1413.1 472.5 1421.3 477.3 1429.5 481.0" fill="none" stroke="#3a2a10" stroke-width="1" stroke-linejoin="round" stroke-linecap="round" />
<path d="M1325.5 630.0C1333 634.3 1339.7 639.8 1348 643.0C1356.3 646.2 1366.3 647 1375.5 649.0" fill="none" stroke="#3a2a10" stroke-width="1" stroke-linejoin="round" stroke-linecap="round" />
<path d="M1340 514.0C1342 510.5 1349 515.7 1350 519.0C1351 522.3 1348.2 526.8 1346 534.0C1343.8 541.2 1339.3 555.7 1337 562.0C1334.7 568.3 1333.7 568.7 1332 572.0C1334 561.3 1336.7 549.7 1338 540.0C1339.3 530.3 1338 517.5 1340 514.0Z" fill="#cf7416" stroke="#3a2a10" stroke-width="0.8" stroke-linejoin="round" stroke-linecap="round" />
<path d="M686 480.0C687 477.2 686.5 473.5 689 471.5C691.5 469.5 696.2 468.2 701 468.0C705.8 467.8 714.3 468 718 470.0C721.7 472 721.3 476.7 723 480.0L686 480.0Z" fill="#d9822a" stroke="#5a3206" stroke-width="0.8" stroke-linejoin="round" stroke-linecap="round" />
<path d="M469 655.0C470 650 470.2 645.5 472 640.0C473.8 634.5 473.7 629.2 480 622.0C486.3 614.8 496.3 607.7 510 597.0C523.7 586.3 547 569 562 558.0C577 547 586.2 540.7 600 531.0C613.8 521.3 633.3 508.3 645 500.0C656.7 491.7 660 485.3 670 481.0C680 476.7 693 474.8 705 474.0C717 473.2 729.5 473.8 742 476.0C754.5 478.2 769.2 482.2 780 487.0C790.8 491.8 798.7 498.7 807 505.0C815.3 511.3 824.8 519.2 830 525.0C835.2 530.8 835.3 535 838 540.0L840 640.0L700 700.0L520 700.0L469 655.0Z" fill="#474747" stroke="#1c1c1c" stroke-width="1" stroke-linejoin="round" stroke-linecap="round" />
<path d="M650 525.0C656.7 520 660.8 513.5 670 510.0C679.2 506.5 693 504.7 705 504.0C717 503.3 730.3 503.8 742 506.0C753.7 508.2 765.3 512.3 775 517.5C784.7 522.7 793.8 531.1 800 537.0C806.2 542.9 808 547.7 812 553.0L830 560.0L820 600.0C813.3 592.3 806.7 584.2 800 577.0C793.3 569.8 787.5 562.8 780 557.0C772.5 551.2 765.5 546.5 755 542.0C744.5 537.5 729.5 532.5 717 530.0C704.5 527.5 690.3 526.5 680 527.0C669.7 527.5 663.3 531 655 533.0L650 525.0Z" fill="#2c2c2c" stroke="none" stroke-width="0" stroke-linejoin="round" stroke-linecap="round" />
<path d="M646 499.0C654 493 660.2 485.2 670 481.0C679.8 476.8 693 474.8 705 474.0C717 473.2 729.5 473.8 742 476.0C754.5 478.2 769.2 482.2 780 487.0C790.8 491.8 798.7 498.7 807 505.0C815.3 511.3 825.2 519.8 830 525.0C834.8 530.2 834 532.3 836 536.0L812 553.0C808 547.7 806.2 542.9 800 537.0C793.8 531.1 784.7 522.7 775 517.5C765.3 512.3 753.7 508.2 742 506.0C730.3 503.8 717 503.3 705 504.0C693 504.7 679.2 506.5 670 510.0C660.8 513.5 656.7 520 650 525.0L646 499.0Z" fill="url(#gRim)" stroke="#1c1c1c" stroke-width="1" stroke-linejoin="round" stroke-linecap="round" />
<path d="M646 499.0C630.7 509.7 614 521.5 600 531.0C586 540.5 574.7 547.7 562 556.0L582 585.0C589.7 573.3 593.7 560 605 550.0C616.3 540 635 533.3 650 525.0L646 499.0Z" fill="#585858" stroke="#1c1c1c" stroke-width="1" stroke-linejoin="round" stroke-linecap="round" />
<path d="M562 556.0C544.7 569.3 523.7 585 510 596.0C496.3 607 486.7 613.8 480 622.0C473.3 630.2 473.3 637.3 470 645.0L480 632.0C488.3 626.3 492.5 623.3 505 615.0C517.5 606.7 542.2 587 555 582.0C567.8 577 573 584 582 585.0L562 556.0Z" fill="#4e4e4e" stroke="#1c1c1c" stroke-width="1" stroke-linejoin="round" stroke-linecap="round" />
<path d="M628 548.0C624.3 550 624.8 549.2 617 554.0C609.2 558.8 591.4 569.5 581 577.0C570.6 584.5 563.7 591.7 554.5 599.0C545.3 606.3 533.2 614.2 526 621.0C518.8 627.8 514.7 634.7 511 640.0C507.3 645.3 506.3 648.7 504 653.0" fill="none" stroke="#e4e4e4" stroke-width="1.3" stroke-linejoin="round" stroke-linecap="round" />
<path d="M646 503.0C630.7 513.7 614 525.3 600 535.0C586 544.7 577 550 562 561.0C547 572 523.3 590.2 510 601.0C496.7 611.8 491.3 617.7 482 626.0" fill="none" stroke="#2e2e2e" stroke-width="1" stroke-linejoin="round" stroke-linecap="round" />
<path d="M662 528.0C671.3 523.3 676.7 516.3 690 514.0C703.3 511.7 727.8 512 742 514.0C756.2 516 765.3 520.7 775 526.0C784.7 531.3 793.8 539.3 800 546.0C806.2 552.7 808 559.3 812 566.0L806 572.0C800.7 565.3 796 557.8 790 552.0C784 546.2 778.3 541.3 770 537.0C761.7 532.7 751.7 528.3 740 526.0C728.3 523.7 712 521.7 700 523.0C688 524.3 678.7 530.3 668 534.0L662 528.0Z" fill="#6c6c6c" stroke="#222" stroke-width="1" stroke-linejoin="round" stroke-linecap="round" />
<path d="M552 624.0C557 617.3 561.7 610.5 567 604.0C572.3 597.5 579 590 584 585.0C589 580 592.5 577.3 597 574.0C601.5 570.7 606.2 568 611 565.0C615.8 562 621 559.2 626 556.0C631 552.8 636 549.2 641 546.0C646 542.8 649.5 539.4 656 536.5C662.5 533.6 669.8 529.6 680 528.5C690.2 527.4 704.5 527.7 717 530.0C729.5 532.3 744.5 537.9 755 542.5C765.5 547.1 772.5 551.7 780 557.5C787.5 563.3 794.7 570.9 800 577.5C805.3 584.1 809 586.6 812 597.0C815 607.4 818 622.8 818 640.0C818 657.2 816.7 681.7 812 700.0C807.3 718.3 796.2 738.7 790 750.0C783.8 761.3 782 761.5 775 768.0C768 774.5 759 781.5 748 789.0C737 796.5 727 811.2 709 813.0C691 814.8 664.8 818.8 640 800.0C615.2 781.2 574.7 729.3 560 700.0C545.3 670.7 554.7 649.3 552 624.0Z" fill="url(#gSkirt)" stroke="#1c1c1c" stroke-width="1" stroke-linejoin="round" stroke-linecap="round" />
<ellipse cx="680" cy="536" rx="17" ry="6.5" transform="rotate(-5 680 536)" fill="#b8820e" stroke="#4a3404" stroke-width="1" />
<ellipse cx="680" cy="538" rx="14.2" ry="4.1" transform="rotate(-5 680 538)" fill="#8a8a8a" stroke="#6b4a08" stroke-width="0.8" />
<ellipse cx="730" cy="551" rx="18" ry="9" transform="rotate(22 730 551)" fill="#b8820e" stroke="#4a3404" stroke-width="1" />
<ellipse cx="731" cy="553" rx="15.2" ry="6.6" transform="rotate(22 731 553)" fill="#8a8a8a" stroke="#6b4a08" stroke-width="0.8" />
<ellipse cx="690" cy="554" rx="15" ry="6.5" transform="rotate(8 690 554)" fill="#b8820e" stroke="#4a3404" stroke-width="1" />
<ellipse cx="690" cy="556" rx="12.2" ry="4.1" transform="rotate(8 690 556)" fill="#8a8a8a" stroke="#6b4a08" stroke-width="0.8" />
<ellipse cx="741" cy="581" rx="18" ry="10" transform="rotate(38 741 581)" fill="#b8820e" stroke="#4a3404" stroke-width="1" />
<ellipse cx="743" cy="582.5" rx="15.2" ry="7.6" transform="rotate(38 743 582.5)" fill="#8a8a8a" stroke="#6b4a08" stroke-width="0.8" />
<ellipse cx="783" cy="595" rx="22" ry="11.5" transform="rotate(60 783 595)" fill="#b8820e" stroke="#4a3404" stroke-width="1" />
<ellipse cx="785" cy="596" rx="19.2" ry="9.1" transform="rotate(60 785 596)" fill="#8a8a8a" stroke="#6b4a08" stroke-width="0.8" />
<ellipse cx="642" cy="549" rx="14" ry="3.5" transform="rotate(-24 642 549)" fill="#b8820e" stroke="#4a3404" stroke-width="1" />
<ellipse cx="642" cy="550" rx="11.2" ry="1.1" transform="rotate(-24 642 550)" fill="#8a8a8a" stroke="#6b4a08" stroke-width="0.8" />
<ellipse cx="649.6" cy="696.2" rx="128.8" ry="100.7" transform="rotate(57 649.6 696.2)" fill="url(#gRimA)" stroke="#3e2c04" stroke-width="1" />
<ellipse cx="646.9" cy="698.5" rx="118.5" ry="92.5" transform="rotate(58 646.9 698.5)" fill="url(#gFaceB)" stroke="#3e2c04" stroke-width="1" />
<ellipse cx="649" cy="706" rx="101" ry="77" transform="rotate(61 649 706)" fill="url(#gFaceC)" stroke="#3e2c04" stroke-width="1" />
<ellipse cx="655" cy="705" rx="90" ry="66" transform="rotate(60 655 705)" fill="#b07e0c" stroke="#3e2c04" stroke-width="0.9" />
<ellipse cx="660" cy="702" rx="83" ry="59" transform="rotate(58 660 702)" fill="url(#gGroove)" stroke="#5a3e04" stroke-width="0.9" />
<ellipse cx="655.333" cy="705.583" rx="83" ry="59" transform="rotate(57 655.333 705.583)" fill="url(#gGroove)" stroke="#5a3e04" stroke-width="0.9" />
<ellipse cx="650.667" cy="709.167" rx="83" ry="59" transform="rotate(56 650.667 709.167)" fill="url(#gGroove)" stroke="#5a3e04" stroke-width="0.9" />
<ellipse cx="646" cy="712.75" rx="83" ry="59" transform="rotate(55 646 712.75)" fill="url(#gGroove)" stroke="#5a3e04" stroke-width="0.9" />
<ellipse cx="641.333" cy="716.333" rx="83" ry="59" transform="rotate(54 641.333 716.333)" fill="url(#gGroove)" stroke="#5a3e04" stroke-width="0.9" />
<ellipse cx="636.667" cy="719.917" rx="83" ry="59" transform="rotate(53 636.667 719.917)" fill="url(#gGroove)" stroke="#5a3e04" stroke-width="0.9" />
<ellipse cx="632" cy="723.5" rx="83" ry="59" transform="rotate(52 632 723.5)" fill="url(#gGroove)" stroke="#5a3e04" stroke-width="0.9" />
<ellipse cx="627.333" cy="727.083" rx="83" ry="59" transform="rotate(51 627.333 727.083)" fill="url(#gGroove)" stroke="#5a3e04" stroke-width="0.9" />
<ellipse cx="622.667" cy="730.667" rx="83" ry="59" transform="rotate(50 622.667 730.667)" fill="url(#gGroove)" stroke="#5a3e04" stroke-width="0.9" />
<ellipse cx="618" cy="734.25" rx="83" ry="59" transform="rotate(49 618 734.25)" fill="url(#gGroove)" stroke="#5a3e04" stroke-width="0.9" />
<ellipse cx="613.333" cy="737.833" rx="83" ry="59" transform="rotate(48 613.333 737.833)" fill="url(#gGroove)" stroke="#5a3e04" stroke-width="0.9" />
<ellipse cx="608.667" cy="741.417" rx="83" ry="59" transform="rotate(47 608.667 741.417)" fill="url(#gGroove)" stroke="#5a3e04" stroke-width="0.9" />
<ellipse cx="604" cy="745" rx="83" ry="59" transform="rotate(46 604 745)" fill="url(#gGroove)" stroke="#5a3e04" stroke-width="0.9" />
<ellipse cx="592.7" cy="752.9" rx="125.1" ry="99.3" transform="rotate(40.6 592.7 752.9)" fill="url(#gF0)" stroke="#1c1c1c" stroke-width="1" />
<ellipse cx="585.5" cy="755.6" rx="114" ry="88.9" transform="rotate(45 585.5 755.6)" fill="url(#gF1)" stroke="#3e2c04" stroke-width="1" />
<ellipse cx="581.6" cy="758.5" rx="103.8" ry="79.9" transform="rotate(47 581.6 758.5)" fill="url(#gF2)" stroke="#3e2c04" stroke-width="1" />
<ellipse cx="577" cy="761.4" rx="92.8" ry="70.5" transform="rotate(48 577 761.4)" fill="url(#gF3)" stroke="#3e2c04" stroke-width="1" />
<ellipse cx="577.5" cy="765.4" rx="81.2" ry="60.4" transform="rotate(48 577.5 765.4)" fill="#363636" stroke="#1a1a1a" stroke-width="1" />
<ellipse cx="578" cy="765.6" rx="77.5" ry="57" transform="rotate(48 578 765.6)" fill="#6c727a" stroke="#222" stroke-width="0.8" />
<ellipse cx="578.5" cy="766" rx="74.5" ry="54" transform="rotate(48 578.5 766)" fill="#3c3c3c" stroke="#222" stroke-width="0.8" />
<ellipse cx="579" cy="766.5" rx="70.5" ry="50.5" transform="rotate(48 579 766.5)" fill="url(#gDisc)" stroke="#222" stroke-width="0.8" />
<ellipse cx="552" cy="770" rx="6" ry="16" transform="rotate(10 552 770)" fill="#6a6a6a" stroke="#333" stroke-width="0.8" />
<path d="M580 724.0L589 729.0L591 826.0L582 834.0L580 724.0Z" fill="#a8a8a8" stroke="#333" stroke-width="1" stroke-linejoin="round" stroke-linecap="round" />
<path d="M577 750.0C579 743.7 585.7 750.7 589 754.0C592.3 757.3 596.8 764.7 597 770.0C597.2 775.3 593.3 782.3 590 786.0C586.7 789.7 579.2 798 577 792.0C574.8 786 575 756.3 577 750.0Z" fill="url(#gWing)" stroke="#333" stroke-width="1" stroke-linejoin="round" stroke-linecap="round" />
<path d="M580 760.0C582.3 763.7 586.8 767.2 587 771.0C587.2 774.8 583 779 581 783.0" fill="none" stroke="#444" stroke-width="0.8" stroke-linejoin="round" stroke-linecap="round" />
<path d="M547 729.0C548.8 720.5 550 718.2 553 714.0C556 709.8 561 705.2 565 703.5C569 701.8 573.8 702 577 703.5C580.2 705 584 708.8 584.5 712.5C585 716.2 581.5 719.8 580 726.0C578.5 732.2 576.8 741 575.5 750.0C574.2 759 572.8 770 572.5 780.0C572.2 790 573.2 801 574 810.0C574.8 819 577.8 829 577 834.0C576.2 839 573 840 569.5 840.0C566 840 559.8 837 556 834.0C552.2 831 549.2 828.5 547 822.0C544.8 815.5 543.2 804.5 542.5 795.0C541.8 785.5 541.8 776 542.5 765.0C543.2 754 545.2 737.5 547 729.0Z" fill="url(#gBlue)" stroke="#10204a" stroke-width="1" stroke-linejoin="round" stroke-linecap="round" />
<path d="M553 716.0C557 718 560.5 720.2 565 722.0C569.5 723.8 575 725.3 580 727.0" fill="none" stroke="#10204a" stroke-width="1" stroke-linejoin="round" stroke-linecap="round" />
<path d="M548 735.0C552 737.3 555.3 740.3 560 742.0C564.7 743.7 570.7 744 576 745.0" fill="none" stroke="#10204a" stroke-width="1" stroke-linejoin="round" stroke-linecap="round" />
<path d="M556 733.0C554.3 743.7 551.8 753.8 551 765.0C550.2 776.2 549.5 788.5 551 800.0C552.5 811.5 557 822.7 560 834.0" fill="none" stroke="#10204a" stroke-width="0.8" stroke-linejoin="round" stroke-linecap="round" />
<path d="M566 738.0C564.7 748.7 562.5 758.8 562 770.0C561.5 781.2 561.7 793.7 563 805.0C564.3 816.3 567.7 827 570 838.0" fill="none" stroke="#10204a" stroke-width="0.8" stroke-linejoin="round" stroke-linecap="round" />
<path d="M576 708.0C577 710.7 578 713.3 579 716.0" fill="none" stroke="#9db8ea" stroke-width="2" stroke-linejoin="round" stroke-linecap="round" />
<path d="M470 640.0L492 618.0L520 628.0C515 638.7 510.7 649.7 505 660.0C499.3 670.3 490.3 679 486 690.0C481.7 701 481.3 714 479 726.0C476 717.3 471.5 714.3 470 700.0C468.5 685.7 470 660 470 640.0Z" fill="#404040" stroke="#1c1c1c" stroke-width="1" stroke-linejoin="round" stroke-linecap="round" />
<path d="M482 640.0L497 624.0L518 632.0C512 642 505 651.5 500 662.0C495 672.5 490.8 686.2 488 695.0C485.2 703.8 484.7 708.3 483 715.0C481.3 706.7 479.2 699.2 478 690.0C476.8 680.8 475.3 668.3 476 660.0C476.7 651.7 480 646.7 482 640.0Z" fill="#8a8a8a" stroke="#222" stroke-width="0.8" stroke-linejoin="round" stroke-linecap="round" />
<path d="M439 596.0C439.7 607.3 440.3 618.8 441 630.0C441.7 641.2 441.8 653 443 663.0C444.2 673 445.5 682.5 448 690.0C450.5 697.5 454.2 703.5 458 708.0C461.8 712.5 467.5 716 471 717.0C474.5 718 476.3 715 479 714.0C476 704.7 472 696 470 686.0C468 676 466.5 662.2 467 654.0C467.5 645.8 469.3 643.2 473 637.0C476.7 630.8 483.7 623.7 489 617.0L502 603.0L470 590.0L439 596.0Z" fill="url(#gLArm)" stroke="#1c1c1c" stroke-width="1" stroke-linejoin="round" stroke-linecap="round" />
<path d="M450 618.0L451 672.0L460 674.0L470 646.0L474 618.0L450 618.0Z" fill="#b8b8b8" stroke="#333" stroke-width="0.9" stroke-linejoin="round" stroke-linecap="round" />
<path d="M458 620.0C458.3 637.3 458.7 654.7 459 672.0" fill="none" stroke="#444" stroke-width="0.8" stroke-linejoin="round" stroke-linecap="round" />
<path d="M435.5 562.0C451.7 558.3 473.6 552.7 484 551.0C494.4 549.3 494.6 550.3 498 552.0C501.4 553.7 502.7 556.8 504.5 561.0C506.3 565.2 507.5 571.7 509 577.0L498 588.0L502 603.0L489 617.0L470 612.0L462 596.0L440 600.0L435.5 562.0Z" fill="#e6e6e6" stroke="#1c1c1c" stroke-width="1" stroke-linejoin="round" stroke-linecap="round" />
<path d="M462 572.0C464.7 570.7 462.8 569.5 470 568.0C477.2 566.5 493.3 564.7 505 563.0" fill="none" stroke="#333" stroke-width="0.8" stroke-linejoin="round" stroke-linecap="round" />
<path d="M484 590.0L498 586.0L497 598.0L485 608.0L484 590.0Z" fill="#8e8e8e" stroke="#333" stroke-width="1" stroke-linejoin="round" stroke-linecap="round" />
<path d="M484 590.0C484 598 484 606 484 614.0" fill="none" stroke="#333" stroke-width="0.9" stroke-linejoin="round" stroke-linecap="round" />
<path d="M431 563.5C439 562 449.7 557.9 455 559.0C460.3 560.1 461.7 565.2 463 570.0C464.3 574.8 464.3 583.5 463 588.0C461.7 592.5 457.7 594 455 597.0L433 596.5L431 563.5Z" fill="url(#gNub)" stroke="#1c1c1c" stroke-width="1" stroke-linejoin="round" stroke-linecap="round" />
<ellipse cx="430" cy="580" rx="10" ry="16.5" transform="rotate(-8 430 580)" fill="#8a8a8a" stroke="#1c1c1c" stroke-width="1" />
<ellipse cx="443" cy="598" rx="6" ry="9" transform="rotate(-10 443 598)" fill="#b0b0b0" stroke="#333" stroke-width="0.8" />
<path d="M463 571.0L474 570.0L474 588.0L463 589.0L463 571.0Z" fill="#9a9a9a" stroke="#333" stroke-width="1" stroke-linejoin="round" stroke-linecap="round" />
<ellipse cx="797" cy="700" rx="37" ry="52" transform="rotate(14 797 700)" fill="#555" stroke="#1c1c1c" stroke-width="1" />
<ellipse cx="810" cy="700" rx="34" ry="50.5" transform="rotate(14 810 700)" fill="#8e8e8e" stroke="#1c1c1c" stroke-width="1" />
<ellipse cx="823" cy="700" rx="31.5" ry="49.5" transform="rotate(14 823 700)" fill="#cdcdcd" stroke="#1c1c1c" stroke-width="1" />
<ellipse cx="882" cy="556" rx="19" ry="39" transform="rotate(-12 882 556)" fill="#454545" stroke="#1c1c1c" stroke-width="1" />
<path d="M874 536.0C878 537.3 883.5 535.2 886 540.0C888.5 544.8 889.3 557 889 565.0C888.7 573 885.7 580.3 884 588.0L874 592.0L874 536.0Z" fill="#d4d4d4" stroke="#1c1c1c" stroke-width="0.9" stroke-linejoin="round" stroke-linecap="round" />
<path d="M834 529.5C843.3 528.2 854.8 523.8 862 525.5C869.2 527.2 873.8 533.6 877 540.0C880.2 546.4 881.2 556 881 564.0C880.8 572 878.5 582 876 588.0C873.5 594 872 596.8 866 600.0C860 603.2 848.7 604.7 840 607.0L834 529.5Z" fill="url(#gRoll)" stroke="#1c1c1c" stroke-width="1" stroke-linejoin="round" stroke-linecap="round" />
<path d="M853 527.0C857.3 533 863.3 537.5 866 545.0C868.7 552.5 869.5 563.5 869 572.0C868.5 580.5 865.3 590.8 863 596.0C860.7 601.2 857.7 601 855 603.5" fill="none" stroke="#444" stroke-width="0.8" stroke-linejoin="round" stroke-linecap="round" />
<ellipse cx="833" cy="568" rx="27" ry="39" transform="rotate(14 833 568)" fill="#747474" stroke="#1c1c1c" stroke-width="1" />
<path d="M866 519.0C870.7 518.3 874 516.7 880 517.0C886 517.3 896.5 517.2 902 521.0C907.5 524.8 910.5 533.5 913 540.0C915.5 546.5 916.8 554.3 917 560.0C917.2 565.7 915.5 569 914 574.0C912.5 579 910.7 583.7 908 590.0C905.3 596.3 902 605.7 898 612.0C894 618.3 888.2 623.7 884 628.0C879.8 632.3 876.3 632.7 873 638.0C869.7 643.3 866.2 652.3 864 660.0C861.8 667.7 861 674.8 860 684.0C859 693.2 860.2 706.2 858 715.5C855.8 724.8 851.8 734.1 847 740.0C842.2 745.9 834.7 751 829 751.0C823.3 751 817.1 745.9 813 740.0C808.9 734.1 805.9 723.3 804.5 715.5C803.1 707.7 803.9 698.9 804.5 693.0C805.1 687.1 806.4 684.5 808 680.0C809.6 675.5 810 670.7 814 666.0C818 661.3 825.7 656.3 832 652.0C838.3 647.7 846 644 852 640.0C858 636 863.3 632.7 868 628.0C872.7 623.3 876.2 618 880 612.0C883.8 606 888.7 598 891 592.0C893.3 586 893.7 580.3 894 576.0C894.3 571.7 893.8 570.3 893 566.0C892.2 561.7 891 555.2 889 550.0C887 544.8 884.8 538.5 881 535.0C877.2 531.5 871 531 866 529.0L866 519.0Z" fill="url(#gRArm)" stroke="#1c1c1c" stroke-width="1" stroke-linejoin="round" stroke-linecap="round" />
<path d="M894 576.0C901 574.7 908 573.3 915 572.0" fill="none" stroke="#333" stroke-width="0.8" stroke-linejoin="round" stroke-linecap="round" />
<path d="M873 638.0C870.7 641.3 870.2 643.3 866 648.0C861.8 652.7 852.3 660.7 848 666.0C843.7 671.3 841.7 676 840 680.0C838.3 684 838.7 686.7 838 690.0" fill="none" stroke="#333" stroke-width="0.8" stroke-linejoin="round" stroke-linecap="round" />
<path d="M805 706.0C812 707 819 708 826 709.0" fill="none" stroke="#333" stroke-width="0.8" stroke-linejoin="round" stroke-linecap="round" />
<ellipse cx="842" cy="702" rx="14" ry="25" transform="rotate(12 842 702)" fill="#b4b4b4" stroke="#333" stroke-width="1" />
<ellipse cx="840" cy="704" rx="9.5" ry="18" transform="rotate(12 840 704)" fill="#e6e6e6" stroke="#333" stroke-width="1" />
<ellipse cx="836" cy="706" rx="5" ry="9" transform="rotate(12 836 706)" fill="#555" stroke="#333" stroke-width="1" />
<ellipse cx="835.5" cy="707" rx="2.5" ry="4.5" transform="rotate(12 835.5 707)" fill="#333" stroke="none" stroke-width="0" />
<path d="M906 524.0C908.7 525 911.3 525.7 914 527.0C916.7 528.3 922 527.2 922 532.0C922 536.8 916.7 548 914 556.0C913.3 550.7 913.3 545.3 912 540.0C910.7 534.7 908 529.3 906 524.0Z" fill="#e2e2e2" stroke="#1c1c1c" stroke-width="0.8" stroke-linejoin="round" stroke-linecap="round" />
<path d="M908 531.0C911.3 530.7 914.7 530.3 918 530.0" fill="none" stroke="#333" stroke-width="0.7" stroke-linejoin="round" stroke-linecap="round" />
<path d="M911 538.0C914 537.3 917 536.7 920 536.0" fill="none" stroke="#333" stroke-width="0.7" stroke-linejoin="round" stroke-linecap="round" />
<path d="M914 562.0L912 558.0L898 603.0L896 625.0C897.3 620.7 897 622.5 900 612.0C903 601.5 909.3 578.7 914 562.0Z" fill="#bdbdbd" stroke="#1c1c1c" stroke-width="0.8" stroke-linejoin="round" stroke-linecap="round" />
<path d="M432 581.0C426.7 581.3 421.3 581.4 416 582.0C410.7 582.6 405.3 583.4 400 584.5C394.7 585.6 388.7 587 384 588.5C379.3 590 374.9 591.6 372 593.5C369.1 595.4 366.7 597.8 366.5 600.0C366.3 602.2 368.1 605.1 371 607.0C373.9 608.9 378.8 610 384 611.5C389.2 613 392.7 613.8 402 616.0C411.3 618.2 422.5 621.6 440 624.5C457.5 627.4 484.8 631 507 633.5C529.2 636 550.8 638.2 573 639.5C595.2 640.8 614.3 641.2 640 641.0C665.7 640.8 699.2 639.9 727 638.5C754.8 637.1 786.5 634.1 807 632.5C827.5 630.9 835.7 630.2 850 629.0" fill="none" stroke="#26343d" stroke-width="18" stroke-linejoin="round" stroke-linecap="round" />
<path d="M432 581.0C426.7 581.3 421.3 581.4 416 582.0C410.7 582.6 405.3 583.4 400 584.5C394.7 585.6 388.7 587 384 588.5C379.3 590 374.9 591.6 372 593.5C369.1 595.4 366.7 597.8 366.5 600.0C366.3 602.2 368.1 605.1 371 607.0C373.9 608.9 378.8 610 384 611.5C389.2 613 392.7 613.8 402 616.0C411.3 618.2 422.5 621.6 440 624.5C457.5 627.4 484.8 631 507 633.5C529.2 636 550.8 638.2 573 639.5C595.2 640.8 614.3 641.2 640 641.0C665.7 640.8 699.2 639.9 727 638.5C754.8 637.1 786.5 634.1 807 632.5C827.5 630.9 835.7 630.2 850 629.0" fill="none" stroke="#b0c8d6" stroke-width="16" stroke-linejoin="round" stroke-linecap="round" />
<path d="M432 578.0C426.7 578.3 421.3 578.4 416 579.0C410.7 579.6 405.3 580.4 400 581.5C394.7 582.6 388.7 584 384 585.5C379.3 587 374.9 588.6 372 590.5C369.1 592.4 366.7 594.8 366.5 597.0C366.3 599.2 368.1 602.1 371 604.0C373.9 605.9 378.8 607 384 608.5C389.2 610 392.7 610.8 402 613.0C411.3 615.2 422.5 618.6 440 621.5C457.5 624.4 484.8 628 507 630.5C529.2 633 550.8 635.2 573 636.5C595.2 637.8 614.3 638.2 640 638.0C665.7 637.8 699.2 636.9 727 635.5C754.8 634.1 786.5 631.1 807 629.5C827.5 627.9 835.7 627.2 850 626.0" fill="none" stroke="#cfe0ea" stroke-width="7" stroke-linejoin="round" stroke-linecap="round" />
<path d="M432 576.5C426.7 576.8 421.3 576.9 416 577.5C410.7 578.1 405.3 578.9 400 580.0C394.7 581.1 388.7 582.5 384 584.0C379.3 585.5 374.9 587.1 372 589.0C369.1 590.9 366.7 593.2 366.5 595.5C366.3 597.8 368.1 600.6 371 602.5C373.9 604.4 378.8 605.5 384 607.0C389.2 608.5 392.7 609.3 402 611.5C411.3 613.7 422.5 617.1 440 620.0C457.5 622.9 484.8 626.5 507 629.0C529.2 631.5 550.8 633.8 573 635.0C595.2 636.2 614.3 636.7 640 636.5C665.7 636.3 699.2 635.4 727 634.0C754.8 632.6 786.5 629.6 807 628.0C827.5 626.4 835.7 625.7 850 624.5" fill="none" stroke="#dcebf2" stroke-width="3" stroke-linejoin="round" stroke-linecap="round" />
<path d="M835 630.0C840 629.7 845.8 629.8 850 629.0C854.2 628.2 857.7 627.2 860 625.0C862.3 622.8 863.8 619.2 864 616.0C864.2 612.8 862 609.3 861 606.0" fill="none" stroke="#26343d" stroke-width="15" stroke-linejoin="round" stroke-linecap="round" />
<path d="M835 630.0C840 629.7 845.8 629.8 850 629.0C854.2 628.2 857.7 627.2 860 625.0C862.3 622.8 863.8 619.2 864 616.0C864.2 612.8 862 609.3 861 606.0" fill="none" stroke="#b9cfdb" stroke-width="13" stroke-linejoin="round" stroke-linecap="round" />
<path d="M834 627.5C839 627.2 844.8 627.3 849 626.5C853.2 625.7 856.7 624.7 859 622.5C861.3 620.3 862.8 616.7 863 613.5C863.2 610.3 861 606.8 860 603.5" fill="none" stroke="#d9e8f0" stroke-width="3" stroke-linejoin="round" stroke-linecap="round" />
<ellipse cx="859.5" cy="604" rx="7" ry="4.5" transform="rotate(25 859.5 604)" fill="#c9dce6" stroke="#26343d" stroke-width="1" />
<path d="M619 632.0C619.3 637.3 619.7 642.7 620 648.0" fill="none" stroke="#26343d" stroke-width="1" stroke-linejoin="round" stroke-linecap="round" />
<path d="M726 631.0C726.3 636 726.7 641 727 646.0" fill="none" stroke="#26343d" stroke-width="1" stroke-linejoin="round" stroke-linecap="round" />
<path d="M381 587.0C382 590 383 593 384 596.0" fill="none" stroke="#26343d" stroke-width="1" stroke-linejoin="round" stroke-linecap="round" />
<path d="M372 606.0C373.7 608.3 375.3 610.7 377 613.0" fill="none" stroke="#26343d" stroke-width="1" stroke-linejoin="round" stroke-linecap="round" /></svg><svg width="220" height="220" viewBox="1380 100 220 220" style="position:absolute;left:1380px;top:5px">
<g fill="#dde6ee">
<path d="M1487.8 113.5L1480 125h15.6z"/>
<path d="M1487.8 298.5L1480 288h15.6z"/>
<path d="M1394.5 206.5L1406.7 198v17z"/>
<path d="M1581 206.5L1568.9 198v17z"/>
<path d="M1460 122.5l2.5 5.5c-14 4-25 11-33.5 20.5l4 3.5-11.5 2.5 1-12 3.5 3c9-10.5 20.5-18.5 34-23z"/>
<path d="M1515.5 122.5l-2.5 5.5c14 4 25 11 33.5 20.5l-4 3.5 11.5 2.5-1-12-3.5 3c-9-10.5-20.5-18.5-34-23z"/>
</g>
<path d="M1450 166l26-12c2-1 4-1 6 0l46 13c4 1 6 4 6 7l1 44c0 3-1 6-4 9l-28 28c-3 3-7 4-10 2l-46-15c-4-1-6-4-6-8v-56c0-5 4-9 9-12z" fill="#dde6ee"/>
<path d="M1459 169l19-10c2-1 3-1 5 0l42 12c3 1 3 3 1 5l-19 15c-2 1.5-4 2-6 1l-41-14c-4-1.5-4-7-1-9z" fill="#fdfdfc"/>
<path d="M1450 192l40 13c3 1 5 4 5 7v37c0 4-3 6-6 5l-38-13c-3-1-5-4-5-7v-37c0-4 2-6 4-5z" fill="#fdfdfc"/>
<path d="M1507 204l18-14c3-2 6-1 6 3l1 28c0 3-1 5-3 7l-19 19c-3 3-6 2-6-2v-32c0-4 1-7 3-9z" fill="#fdfdfc"/>
<ellipse cx="1498.5" cy="199" rx="8" ry="7" fill="#fdfdfc"/>
<ellipse cx="1448" cy="180" rx="4.5" ry="7" fill="#fdfdfc" transform="rotate(25 1448 180)"/>
<ellipse cx="1496" cy="252" rx="7" ry="3.5" fill="#fdfdfc" transform="rotate(-25 1496 252)"/>
<path d="M1435.5 246L1454.5 229.5" stroke="#4aa860" stroke-width="1.2" opacity=".8"/>
<path d="M1454.5 229.5L1476 211" stroke="#b8d8c4" stroke-width="1"/>
<path d="M1435.5 183V246" stroke="#3048a8" stroke-width="1.6"/>
<path d="M1435.5 246L1499 264" stroke="#e03030" stroke-width="1.6"/>
<g font-family="Liberation Sans, sans-serif">
<text x="1435.5" y="178.5" font-size="14" font-weight="bold" fill="#2438a8" text-anchor="middle">Z</text>
<text x="1510" y="275" font-size="14" font-weight="bold" fill="#e03030" text-anchor="middle">X</text>
<text x="1479" y="213" font-size="9" fill="#b4c8d8" text-anchor="middle">Y</text>
<text x="1469" y="225.5" font-size="11.5" fill="#222" text-anchor="middle" transform="rotate(12 1469 222)">Front</text>
<text x="1488" y="176.5" font-size="8.5" font-style="italic" fill="#222" text-anchor="middle" transform="rotate(18 1488 174)">Top</text>
<text x="1520" y="218" font-size="8.5" font-style="italic" fill="#222" text-anchor="middle" transform="rotate(-52 1520 215)">Right</text>
</g>
<g transform="translate(1533 277)">
<path d="M1 5.5l5-4.5h14.5l1.5 1.5v14l-5 5h-14.5l-1.5-1.5z" fill="#fdfdfc" stroke="#444" stroke-width="1.3" stroke-linejoin="round"/>
<path d="M1.5 6h15v15h-15z" fill="#aaa"/><path d="M1.5 6l5-4.5h14l-4 4.5z" fill="#eee"/><path d="M16.5 6l4.5-4.5v14.5l-4.5 5z" fill="#ddd"/>
<path d="M1.5 6h15l4.5-4.5M16.5 6v15" fill="none" stroke="#555" stroke-width="1"/>
</g>
<path d="M1565 286h11l-5.5 6z" fill="#222"/>
</svg>
<!-- right side buttons -->
<div class="abs" style="left:1562px;top:342px;width:40px;height:82px;background:#fefefe;border:1px solid #b8b8b8"></div>
<div class="abs" style="left:1562px;top:382px;width:40px;height:1px;background:#b8b8b8"></div>
<svg class="abs" style="left:1568px;top:350px" width="26" height="26" viewBox="0 0 26 26"><rect x="2" y="2" width="21" height="21" rx="3.5" fill="#fefefe" stroke="#333" stroke-width="1.5"/><path d="M6 7.5h12M8.5 10.5h12M8.5 14h12M8.5 18h12M7 8v10.5" stroke="#222" stroke-width="1.6" fill="none"/></svg>
<svg class="abs" style="left:1566px;top:388px" width="30" height="30" viewBox="0 0 30 30"><path d="M8 12l10-4 9 4v10l-9 5-10-5z" fill="#fefefe" stroke="#222" stroke-width="1.3" stroke-linejoin="round"/><path d="M8 12l10 4.5 9-4.5M18 16.5v10.5" fill="none" stroke="#222" stroke-width="1.3"/><rect x="2" y="2" width="12.5" height="10" fill="#2f6fc0"/><path d="M2 5.5h12.5M2 8.8h12.5M6.2 2v10M10.4 2v10" stroke="#cfe0f4" stroke-width="1"/></svg>
<!-- cursor -->
<svg class="abs" style="left:1220px;top:328px" width="20" height="26" viewBox="0 0 20 26"><path d="M2.5 2v17l4-3.5 3 6.5 3-1.5-3-6h5.5z" fill="#111" stroke="#fff" stroke-width="1.2" stroke-linejoin="round"/></svg>
</div>
<div id="top">
  <div class="logo">Onshape</div>
  <div class="title">Fishing Reel</div>
  <div class="branch">Main</div>
  <div class="btn" style="left:1082px;width:107px">App Store</div>
  <div class="btn" style="left:1200px;width:156px">Learning Center</div>
  <div class="btn share" style="left:1367px;width:76px">Share</div>
  <div class="abs" style="left:1541px;top:13px;font-size:17px;line-height:24px">Cody</div>
  <svg class="abs" style="left:121px;top:14px" width="22" height="22" viewBox="0 0 22 22"><path d="M1 3.4h19.5M1 10.9h19.5M1 18.4h19.5" stroke="#333" stroke-width="3.4"/></svg><svg class="abs" style="left:155px;top:12px" width="28" height="26" viewBox="0 0 28 26"><circle cx="6.750" cy="7.250" r="3.7" fill="none" stroke="#333" stroke-width="1.9"/><path d="M6.750 11v12M6.750 19c0-4 4-4 7.5-5.5" fill="none" stroke="#333" stroke-width="1.9"/><circle cx="6.750" cy="23" r="2.1" fill="#333"/><circle cx="15" cy="13.250" r="2.4" fill="#333"/><path d="M14.6 4.6h11.7M19.5 11h6.8M19.5 17.4h6.8M14.6 23.4h11.7" stroke="#555" stroke-width="2.2"/></svg><svg class="abs" style="left:196px;top:10px" width="24" height="30" viewBox="0 0 24 30"><path d="M5.9 3.8v2M5.9 7.9v2M5.9 20.6v2M5.9 24.4v2" stroke="#333" stroke-width="2.2"/><circle cx="5.9" cy="15.250" r="3.750" fill="#333"/><path d="M12.3 21.6h9.6M17.1 16.8v9.6" stroke="#555" stroke-width="2.4"/></svg><svg class="abs" style="left:1043px;top:13px" width="28" height="24" viewBox="0 0 28 24"><ellipse cx="14.5" cy="10" rx="12" ry="8.5" fill="#5b6b7b"/><path d="M7 15c0 4-2 6-4.5 7.5c5-.5 8-2.5 10-5.5z" fill="#5b6b7b"/></svg><svg class="abs" style="left:1455px;top:13px" width="24" height="24" viewBox="0 0 24 24"><circle cx="12" cy="12" r="11.5" fill="#444"/><text x="12" y="18.5" font-family="Liberation Sans,sans-serif" font-weight="bold" font-size="18" fill="#fff" text-anchor="middle">?</text></svg><svg class="abs" style="left:1485px;top:21px" width="12" height="8" viewBox="0 0 12 8"><path d="M0 1h11l-5.5 6z" fill="#333"/></svg><svg class="abs" style="left:1582px;top:21px" width="12" height="8" viewBox="0 0 12 8"><path d="M0 1h11l-5.5 6z" fill="#333"/></svg><svg class="abs" style="left:1508px;top:11px" width="28" height="28" viewBox="0 0 28 28"><defs><clipPath id="av"><circle cx="14" cy="14" r="13.5"/></clipPath></defs><g clip-path="url(#av)"><rect width="28" height="28" fill="#8fb0d0"/><rect y="20" width="28" height="8" fill="#2a2a2a"/><ellipse cx="14" cy="27" rx="12" ry="7" fill="#222"/><ellipse cx="14" cy="13" rx="6" ry="7.5" fill="#d9a98a"/><path d="M8 10c0-6 12-6 12 0c-2-2-10-2-12 0z" fill="#3a2a22"/><path d="M9.5 16c1 5 8 5 9 0c-1 2-8 2-9 0z" fill="#5a4034"/></g></svg>
</div>
<div id="tools"><div class="sep" style="left:88px"></div><div class="sep" style="left:190px"></div><div class="sep" style="left:238px"></div><div class="sep" style="left:582px"></div><div class="sep" style="left:630px"></div><div class="sep" style="left:890px"></div><div class="sep" style="left:1065px"></div><svg class="abs" style="left:8px;top:10px" width="28" height="28" viewBox="0 0 28 28"><path d="M12.5 6.5v4.5c6 0 9.5 3.5 9.5 10-2-4.5-5-5.5-9.5-5.5v4.5l-8.5-6.750z" fill="#9a9a9a"/></svg><svg class="abs" style="left:50px;top:10px" width="28" height="28" viewBox="0 0 28 28"><path d="M15.5 6.5v4.5c-6 0-9.5 3.5-9.5 10 2-4.5 5-5.5 9.5-5.5v4.5l8.5-6.750z" fill="#9a9a9a"/></svg><svg class="abs" style="left:99px;top:10px" width="28" height="28" viewBox="0 0 28 28"><rect x="5.5" y="10.5" width="10" height="13.5" rx="1.5" fill="#fdfdfc" stroke="#333" stroke-width="1.4"/><path d="M9 10V9.5a1.5 1.5 0 0 1 1.5-1.5h1M20 8h1.5a1.5 1.5 0 0 1 1.5 1.5v14a1.5 1.5 0 0 1-1.5 1.5h-11a1.5 1.5 0 0 1-1.5-1.5" fill="none" stroke="#333" stroke-width="1.4"/><path d="M9 4.5c5 0 6.8 2.5 6.8 9" fill="none" stroke="#222" stroke-width="3"/><path d="M11 12.5h9.6l-4.8 6.5z" fill="#222"/></svg><svg class="abs" style="left:201px;top:10px" width="28" height="28" viewBox="0 0 28 28"><circle cx="14" cy="14" r="11" fill="none" stroke="#333" stroke-width="1.5"/><circle cx="14" cy="14" r="8" fill="none" stroke="#333" stroke-width="1.5"/><path d="M14 6v8h8" fill="none" stroke="#333" stroke-width="1.5"/></svg><svg class="abs" style="left:249px;top:10px" width="28" height="28" viewBox="0 0 28 28"><path d="M5.5 7.5V21A8.5 3.2 0 0 0 22.5 21V7.5" fill="none" stroke="#999" stroke-width="1.2"/><ellipse cx="14" cy="7.5" rx="8.5" ry="3.2" fill="none" stroke="#999" stroke-width="1.2"/><path d="M5.5 13.5v7.5a8.5 3.2 0 0 0 17 0v-7.5a8.5 3 0 0 1-4.5 2.6v4.4h-8v-4.4a8.5 3 0 0 1-4.5-2.6z" fill="#8a8a8a" stroke="#333" stroke-width="1.5" stroke-linejoin="round"/></svg><svg class="abs" style="left:291px;top:10px" width="28" height="28" viewBox="0 0 28 28"><path d="M5.6 5V22.5A8.4 3 0 0 0 22.4 22.5V5" fill="none" stroke="#999" stroke-width="1.2"/><ellipse cx="14" cy="5" rx="8.4" ry="3" fill="none" stroke="#999" stroke-width="1.2"/><path d="M6 8.5C2.5 10 2.5 14 8 15.8" fill="none" stroke="#222" stroke-width="2.6"/><path d="M8 12.8l5.5 4.2-6 2.8z" fill="#222"/><path d="M22 8.5C25.5 10 25.5 14 20 15.8" fill="none" stroke="#222" stroke-width="2.6"/><path d="M20 12.8l-5.5 4.2 6 2.8z" fill="#222"/></svg><svg class="abs" style="left:334px;top:10px" width="28" height="28" viewBox="0 0 28 28"><path d="M6.5 11V21.5A8 3 0 0 0 22.5 21.5V11" fill="none" stroke="#999" stroke-width="1.2"/><ellipse cx="14.5" cy="11" rx="8" ry="3" fill="none" stroke="#999" stroke-width="1.2"/><path d="M3.5 9.5v13M25.5 9.5v13" stroke="#222" stroke-width="2.4"/><path d="M14.5 13V6.5" stroke="#222" stroke-width="2.8"/><path d="M10 8l4.5-6 4.5 6z" fill="#222"/></svg><svg class="abs" style="left:376px;top:10px" width="28" height="28" viewBox="0 0 28 28"><rect x="5.5" y="5" width="18" height="18" fill="none" stroke="#999" stroke-width="1.1"/><path d="M14.5 5v18M5 14h19" stroke="#222" stroke-width="2.6"/><path d="M11 6.5l3.5-4.5 3.5 4.5zM11 21.5l3.5 4.5 3.5-4.5zM7 10.5l-4.5 3.5 4.5 3.5zM22 10.5l4.5 3.5-4.5 3.5z" fill="#222"/></svg><svg class="abs" style="left:419px;top:10px" width="28" height="28" viewBox="0 0 28 28"><path d="M6 10.5V22A8 2.8 0 0 0 22 22V10.5" fill="none" stroke="#999" stroke-width="1.2"/><ellipse cx="14" cy="10.5" rx="8" ry="2.8" fill="none" stroke="#999" stroke-width="1.2"/><path d="M14 13V6" stroke="#222" stroke-width="2.6"/><path d="M10 7.5l4-5.5 4 5.5z" fill="#222"/><path d="M6 12.5C2.5 14 2.5 17.5 8 19" fill="none" stroke="#222" stroke-width="2.4"/><path d="M8 16l5.2 4-5.7 2.6z" fill="#222"/><path d="M22 12.5C25.5 14 25.5 17.5 20 19" fill="none" stroke="#222" stroke-width="2.4"/><path d="M20 16l-5.2 4 5.7 2.6z" fill="#222"/></svg><svg class="abs" style="left:461px;top:10px" width="28" height="28" viewBox="0 0 28 28"><path d="M10.5 7.5a4 4 0 0 1 8 0v11.5h3.5a3 3 0 0 1 0 6H7a3 3 0 0 1 0-6h3.5z" fill="none" stroke="#999" stroke-width="1.2"/><circle cx="14.5" cy="6" r="4" fill="none" stroke="#999" stroke-width="1.2"/><path d="M7 13.5h5M17 13.5h5" stroke="#222" stroke-width="2.8"/><path d="M8.5 9.5l-5.5 4 5.5 4zM20.5 9.5l5.5 4-5.5 4z" fill="#222"/><path d="M10.5 17v4.5M18.5 17v4.5" stroke="#555" stroke-width="1.2" stroke-dasharray="1.5 1.5"/></svg><svg class="abs" style="left:504px;top:10px" width="28" height="28" viewBox="0 0 28 28"><circle cx="14.5" cy="14" r="9.8" fill="none" stroke="#444" stroke-width="1.5"/><path d="M14.5 5v18M5 14h19" stroke="#222" stroke-width="2.6"/><path d="M11 6.5l3.5-4.5 3.5 4.5zM11 21.5l3.5 4.5 3.5-4.5zM7 10.5l-4.5 3.5 4.5 3.5zM22 10.5l4.5 3.5-4.5 3.5z" fill="#222"/></svg><svg class="abs" style="left:546px;top:10px" width="28" height="28" viewBox="0 0 28 28"><path d="M3.5 10l6-5v14l-6 5zM18.5 10l6-5v14l-6 5z" fill="none" stroke="#999" stroke-width="1.2"/><path d="M8 14.5h12" stroke="#333" stroke-width="1.8"/><path d="M10.5 11.5l-4 3 4 3zM17.5 11.5v6" fill="#333" stroke="#333" stroke-width="1.2"/></svg><svg class="abs" style="left:594px;top:10px" width="28" height="28" viewBox="0 0 28 28"><path d="M3.5 13c6 1.5 9.5 5.5 10.5 12" fill="none" stroke="#888" stroke-width="1.2"/><path d="M9.5 8.5a8 8 0 0 1 14.5 4.5l-7.5 3.5" fill="none" stroke="#999" stroke-width="1.2"/><path d="M7.5 6.5c5 .500 10 5 12.5 13" fill="none" stroke="#222" stroke-width="2.6" stroke-dasharray="6.5 2.5"/><path d="M3.5 3.5l7 .500-3.5 5.5zM22.5 25.5l-5.5-4.5 6-2.5z" fill="#222"/></svg><svg class="abs" style="left:641px;top:10px" width="28" height="28" viewBox="0 0 28 28"><rect x="4" y="3.5" width="20.5" height="20" fill="none" stroke="#222" stroke-width="1.8" stroke-dasharray="4 2 1.5 2"/><rect x="8.5" y="7.5" width="9" height="9" fill="#fdfdfc" stroke="#333" stroke-width="1.3"/><rect x="13" y="11.5" width="9" height="9" fill="none" stroke="#333" stroke-width="1.3"/><circle cx="4" cy="3.5" r="1.7" fill="#fdfdfc" stroke="#222" stroke-width="1.2"/><circle cx="4" cy="23.5" r="1.7" fill="#fdfdfc" stroke="#222" stroke-width="1.2"/><circle cx="24.5" cy="3.5" r="1.7" fill="#fdfdfc" stroke="#222" stroke-width="1.2"/><circle cx="24.5" cy="23.5" r="1.7" fill="#fdfdfc" stroke="#222" stroke-width="1.2"/></svg><svg class="abs" style="left:684px;top:10px" width="28" height="28" viewBox="0 0 28 28"><path d="M7.5 8V20A8.5 3.2 0 0 0 24.5 20V8" fill="none" stroke="#444" stroke-width="1.3"/><ellipse cx="16" cy="8" rx="8.5" ry="3.2" fill="none" stroke="#444" stroke-width="1.3"/><path d="M8 17h16v3a8 3 0 0 1-16 0z" fill="#aaa"/><path d="M10 5.5l2.3 5 5.4.6-4 3.7 1.1 5.4-4.8-2.7-4.8 2.7 1.1-5.4-4-3.7 5.4-.6z" fill="#222"/></svg><svg class="abs" style="left:726px;top:10px" width="28" height="28" viewBox="0 0 28 28"><path d="M3.5 14l5-4h14l-3 4zM3.5 14h16v9h-16zM19.5 14l3-4v9l-3 4z" fill="#fdfdfc" stroke="#222" stroke-width="1.3"/><path d="M6.5 14v-2.5h5V14M13 14v-2.5h5V14" fill="none" stroke="#222" stroke-width="1.1"/><path d="M6 18.5h11" stroke="#333" stroke-width="1.8"/><path d="M13.5 3.5V8A3.5 1.5 0 0 0 20.5 8V3.5" fill="#999" stroke="#333" stroke-width="1.2"/><ellipse cx="17" cy="3.5" rx="3.5" ry="1.5" fill="#999" stroke="#333" stroke-width="1.2"/><path d="M17 9.5v4" stroke="#222" stroke-width="1.3"/></svg><svg class="abs" style="left:769px;top:10px" width="28" height="28" viewBox="0 0 28 28"><path d="M9 2.5h5.5v10.5h-10.5v-5.5h5z" fill="none" stroke="#aaa" stroke-width="1.3" stroke-linejoin="round"/><path d="M11 4.5h1.5v6.5h-6.5v-1.5h5z" fill="none" stroke="#ccc" stroke-width="1"/><path d="M19.5 12.5h5.5v11h-11v-5.5h5.5z" fill="none" stroke="#333" stroke-width="1.5" stroke-linejoin="round"/><path d="M21.5 14.5h1.5v7h-7v-1.5h5.5z" fill="none" stroke="#999" stroke-width="1"/><path d="M6.5 15v5.5h5" fill="none" stroke="#333" stroke-width="1.6"/><path d="M10.5 17.5l4 3-4 3z" fill="#333"/></svg><svg class="abs" style="left:811px;top:10px" width="28" height="28" viewBox="0 0 28 28"><rect x="3.5" y="4.5" width="10" height="10" rx="1" fill="#666" stroke="#444" stroke-width="1.2"/><rect x="14.5" y="4.5" width="10" height="10" rx="1" fill="#a8a8a8" stroke="#555" stroke-width="1.2"/><rect x="3.5" y="15.5" width="10" height="10" rx="1" fill="#f4f4f4" stroke="#555" stroke-width="1.2"/><rect x="14.5" y="15.5" width="10" height="10" rx="1" fill="#f4f4f4" stroke="#555" stroke-width="1.2"/><path d="M2.5 5.5l2-2.5h21l-1 1.5" fill="none" stroke="#444" stroke-width="1.2"/></svg><svg class="abs" style="left:854px;top:10px" width="28" height="28" viewBox="0 0 28 28"><g transform="rotate(30 10 7)"><rect x="5.75" y="4.5" width="8.5" height="5" rx="2.5" fill="#777" stroke="#444" stroke-width=".900"/><path d="M11 4.5v5" stroke="#555" stroke-width=".800"/></g><g transform="rotate(-40 19.5 8.5)"><rect x="15.25" y="6" width="8.5" height="5" rx="2.5" fill="#fdfdfc" stroke="#444" stroke-width=".900"/><path d="M20.5 6v5" stroke="#555" stroke-width=".800"/></g><g transform="rotate(30 21 17)"><rect x="16.75" y="14.5" width="8.5" height="5" rx="2.5" fill="#fdfdfc" stroke="#444" stroke-width=".900"/><path d="M22 14.5v5" stroke="#555" stroke-width=".800"/></g><g transform="rotate(-20 12 20.5)"><rect x="7.75" y="18" width="8.5" height="5" rx="2.5" fill="#fdfdfc" stroke="#444" stroke-width=".900"/><path d="M13 18v5" stroke="#555" stroke-width=".800"/></g><g transform="rotate(-55 6 14.5)"><rect x="1.75" y="12" width="8.5" height="5" rx="2.5" fill="#fdfdfc" stroke="#444" stroke-width=".900"/><path d="M7 12v5" stroke="#555" stroke-width=".800"/></g><g transform="rotate(35 14.5 13)"><rect x="10.25" y="10.5" width="8.5" height="5" rx="2.5" fill="#fdfdfc" stroke="#444" stroke-width=".900"/><path d="M15.5 10.5v5" stroke="#555" stroke-width=".800"/></g></svg><svg class="abs" style="left:901px;top:10px" width="28" height="28" viewBox="0 0 28 28"><circle cx="9" cy="8" r="3.41" fill="none" stroke="#222" stroke-width="2.75"/><path d="M12.85 8L14.94 8" stroke="#222" stroke-width="2.31"/><path d="M11.7224 10.7224L13.2002 12.2002" stroke="#222" stroke-width="2.31"/><path d="M9 11.85L9 13.94" stroke="#222" stroke-width="2.31"/><path d="M6.27764 10.7224L4.79979 12.2002" stroke="#222" stroke-width="2.31"/><path d="M5.15 8L3.06 8" stroke="#222" stroke-width="2.31"/><path d="M6.27764 5.27764L4.79979 3.79979" stroke="#222" stroke-width="2.31"/><path d="M9 4.15L9 2.06" stroke="#222" stroke-width="2.31"/><path d="M11.7224 5.27764L13.2002 3.79979" stroke="#222" stroke-width="2.31"/><circle cx="18" cy="18" r="4.34" fill="none" stroke="#222" stroke-width="3.5"/><path d="M22.9 18L25.56 18" stroke="#222" stroke-width="2.94"/><path d="M21.4648 21.4648L23.3457 23.3457" stroke="#222" stroke-width="2.94"/><path d="M18 22.9L18 25.56" stroke="#222" stroke-width="2.94"/><path d="M14.5352 21.4648L12.6543 23.3457" stroke="#222" stroke-width="2.94"/><path d="M13.1 18L10.44 18" stroke="#222" stroke-width="2.94"/><path d="M14.5352 14.5352L12.6543 12.6543" stroke="#222" stroke-width="2.94"/><path d="M18 13.1L18 10.44" stroke="#222" stroke-width="2.94"/><path d="M21.4648 14.5352L23.3457 12.6543" stroke="#222" stroke-width="2.94"/></svg><svg class="abs" style="left:944px;top:10px" width="28" height="28" viewBox="0 0 28 28"><circle cx="14" cy="11.5" r="5.27" fill="none" stroke="#222" stroke-width="4.25"/><path d="M19.95 11.5L23.18 11.5" stroke="#222" stroke-width="3.57"/><path d="M18.8137 14.9973L21.4268 16.8959" stroke="#222" stroke-width="3.57"/><path d="M15.8387 17.1588L16.8368 20.2307" stroke="#222" stroke-width="3.57"/><path d="M12.1613 17.1588L11.1632 20.2307" stroke="#222" stroke-width="3.57"/><path d="M9.18635 14.9973L6.57322 16.8959" stroke="#222" stroke-width="3.57"/><path d="M8.05 11.5L4.82 11.5" stroke="#222" stroke-width="3.57"/><path d="M9.18635 8.00268L6.57322 6.10413" stroke="#222" stroke-width="3.57"/><path d="M12.1613 5.84121L11.1632 2.7693" stroke="#222" stroke-width="3.57"/><path d="M15.8387 5.84121L16.8368 2.7693" stroke="#222" stroke-width="3.57"/><path d="M18.8137 8.00268L21.4268 6.10413" stroke="#222" stroke-width="3.57"/><path d="M2.5 24.5l3-4h2l1.5 2.5 1.5-2.5h2.5l1.5 2.5 1.5-2.5h2.5l1.5 2.5 1.5-2.5h2l2.5 4z" fill="#222"/></svg><svg class="abs" style="left:986px;top:10px" width="28" height="28" viewBox="0 0 28 28"><path d="M6 4.5l2.5 15M11 3.5l2.5 17M16 3.5l2.5 17M21 4.5l2.5 15" stroke="#222" stroke-width="2.4"/><path d="M4.5 8c-1.5 3-1.5 7 0 10M8.5 5l3 14M13.5 4l3 15M18.5 4l3 15" stroke="#999" stroke-width="1" fill="none"/><path d="M5 24.5h15" stroke="#222" stroke-width="1.6"/><path d="M19 21.5l5 3-5 3z" fill="#222"/></svg><svg class="abs" style="left:1028px;top:10px" width="28" height="28" viewBox="0 0 28 28"><rect x="14.5" y="2.5" width="10.5" height="8.5" rx="1.8" fill="#333"/><rect x="5" y="14.5" width="10.5" height="8.5" rx="1.8" fill="#333"/><path d="M8 7h5.5M17 19h5" stroke="#222" stroke-width="1.8"/><path d="M9.5 4l-4 3 4 3zM21 16l4 3-4 3zM13 4.5v5M17.5 16.5v5" fill="#222" stroke="#222" stroke-width="1"/></svg><svg class="abs" style="left:1076px;top:10px" width="28" height="28" viewBox="0 0 28 28"><rect x="16" y="2.5" width="9" height="13.5" fill="none" stroke="#888" stroke-width="1.2" stroke-dasharray="2 1.5"/><rect x="3.5" y="16" width="21.5" height="8" fill="#fdfdfc" stroke="#222" stroke-width="1.5"/><circle cx="20.5" cy="20" r="2.4" fill="none" stroke="#555" stroke-width="1.1"/><circle cx="20.5" cy="20" r=".900" fill="#555"/></svg><svg class="abs" style="left:1119px;top:10px" width="28" height="28" viewBox="0 0 28 28"><path d="M5.5 20v-16.5h15v12" fill="none" stroke="#333" stroke-width="1.4"/><path d="M5.5 20h4" stroke="#333" stroke-width="1.4"/><path d="M8.5 7h1.5M11.5 7h6.5M8.5 10h1.5M11.5 10h6.5M8.5 13h1.5M11.5 13h6.5" stroke="#333" stroke-width="1.3"/><path d="M9.5 21.5c3-5 10-5 13 0c-3 4.5-10 4.5-13 0z" fill="#fdfdfc" stroke="#333" stroke-width="1.3"/><circle cx="16" cy="21.5" r="2" fill="#333"/><path d="M11 26.5l10-10.5" stroke="#333" stroke-width="1.5"/></svg><svg class="abs" style="left:1161px;top:10px" width="28" height="28" viewBox="0 0 28 28"><path d="M4 11.5l2.5-2.5h5v12.5l-2.5 3h-5z" fill="#fdfdfc" stroke="#333" stroke-width="1.3" stroke-linejoin="round"/><path d="M9 11.5v13M4 11.5h5l2.5-2.5" fill="none" stroke="#333" stroke-width="1.1"/><path d="M15 6.5l3-3h7.5v17.5l-3 3.5h-7.5z" fill="#fdfdfc" stroke="#222" stroke-width="1.4" stroke-linejoin="round"/><path d="M22.5 6.5v18M15 6.5h7.5l3-3" fill="none" stroke="#222" stroke-width="1.2"/><path d="M7.5 2v9.5M3 6.5h9" stroke="#222" stroke-width="2.2"/></svg><div class="abs" style="left:130px;top:13.5px;font-size:17px;line-height:24px;letter-spacing:.3px">Insert</div><div class="abs" style="left:1210px;top:5px;width:187px;height:37px;background:#efefef;border-radius:4px"></div><div class="abs" style="left:1223px;top:13px;font-size:17px;line-height:24px;color:#333">Search tools...</div><div class="abs kbd" style="left:1337px">&#8997;</div><div class="abs kbd" style="left:1358px">C</div></div>
<div id="panel"><div class="abs" style="left:13px;top:9.5px;font-size:16px;font-weight:bold;line-height:24px;letter-spacing:-.13px;color:#333">Instances (12)</div><div class="abs" style="left:238px;top:39px;width:9px;height:537px;background:#d0dbe6"></div><div class="row dim" style="left:66px;top:41.0px;letter-spacing:-0.14px">Origin</div><svg class="abs" style="left:42px;top:48px" width="16" height="16" viewBox="0 0 16 16"><circle cx="7.5" cy="7" r="4.7" fill="none" stroke="#999" stroke-width="1.2"/><circle cx="7.5" cy="7" r="1.8" fill="#999"/></svg><div class="row" style="left:66px;top:73.5px;letter-spacing:-0.35px">Case &lt;1&gt;</div><svg class="abs" style="left:37.5px;top:79.5px" width="18" height="18" viewBox="0 0 18 18"><path d="M7.5 1h7.5a2 2 0 0 1 2 2v11.5a2 2 0 0 1-2 2h-12a2 2 0 0 1-2-2v-4a2 2 0 0 1 2-2h2.5v-5.5a2 2 0 0 1 2-2z" fill="none" stroke="#555" stroke-width="1.4"/><path d="M11.5 3.5v7.5l-7 2M11.5 11l3.5 2.5" fill="none" stroke="#555" stroke-width="1"/></svg><div class="row" style="left:66px;top:106.0px;letter-spacing:0.19px">Toggle &lt;1&gt;</div><svg class="abs" style="left:37.5px;top:112px" width="18" height="18" viewBox="0 0 18 18"><path d="M7.5 1h7.5a2 2 0 0 1 2 2v11.5a2 2 0 0 1-2 2h-12a2 2 0 0 1-2-2v-4a2 2 0 0 1 2-2h2.5v-5.5a2 2 0 0 1 2-2z" fill="none" stroke="#555" stroke-width="1.4"/><path d="M11.5 3.5v7.5l-7 2M11.5 11l3.5 2.5" fill="none" stroke="#555" stroke-width="1"/></svg><div class="row" style="left:66px;top:138.5px;letter-spacing:-0.09px">Cover &lt;1&gt;</div><svg class="abs" style="left:37.5px;top:144.5px" width="18" height="18" viewBox="0 0 18 18"><path d="M7.5 1h7.5a2 2 0 0 1 2 2v11.5a2 2 0 0 1-2 2h-12a2 2 0 0 1-2-2v-4a2 2 0 0 1 2-2h2.5v-5.5a2 2 0 0 1 2-2z" fill="none" stroke="#555" stroke-width="1.4"/><path d="M11.5 3.5v7.5l-7 2M11.5 11l3.5 2.5" fill="none" stroke="#555" stroke-width="1"/></svg><div class="row" style="left:66px;top:171.0px;letter-spacing:0.07px">Bottom Cover &lt;1&gt;</div><svg class="abs" style="left:37.5px;top:177px" width="18" height="18" viewBox="0 0 18 18"><path d="M7.5 1h7.5a2 2 0 0 1 2 2v11.5a2 2 0 0 1-2 2h-12a2 2 0 0 1-2-2v-4a2 2 0 0 1 2-2h2.5v-5.5a2 2 0 0 1 2-2z" fill="none" stroke="#555" stroke-width="1.4"/><path d="M11.5 3.5v7.5l-7 2M11.5 11l3.5 2.5" fill="none" stroke="#555" stroke-width="1"/></svg><div class="row" style="left:66px;top:203.5px;letter-spacing:-0.11px">Drive Gear &lt;1&gt;</div><svg class="abs" style="left:37.5px;top:209.5px" width="18" height="18" viewBox="0 0 18 18"><path d="M7.5 1h7.5a2 2 0 0 1 2 2v11.5a2 2 0 0 1-2 2h-12a2 2 0 0 1-2-2v-4a2 2 0 0 1 2-2h2.5v-5.5a2 2 0 0 1 2-2z" fill="none" stroke="#555" stroke-width="1.4"/><path d="M11.5 3.5v7.5l-7 2M11.5 11l3.5 2.5" fill="none" stroke="#555" stroke-width="1"/></svg><svg class="abs" style="left:13px;top:209.5px" width="14" height="16" viewBox="0 0 14 16"><path d="M4 2.5l5.5 5.5-5.5 5.5" fill="none" stroke="#484848" stroke-width="2.2"/></svg><div class="row" style="left:66px;top:236.0px;letter-spacing:0.05px">Oscillating Gear &lt;1&gt;</div><svg class="abs" style="left:37.5px;top:242px" width="18" height="18" viewBox="0 0 18 18"><path d="M7.5 1h7.5a2 2 0 0 1 2 2v11.5a2 2 0 0 1-2 2h-12a2 2 0 0 1-2-2v-4a2 2 0 0 1 2-2h2.5v-5.5a2 2 0 0 1 2-2z" fill="none" stroke="#555" stroke-width="1.4"/><path d="M11.5 3.5v7.5l-7 2M11.5 11l3.5 2.5" fill="none" stroke="#555" stroke-width="1"/></svg><div class="row" style="left:66px;top:268.5px;letter-spacing:0.22px">Oscillating Slider &lt;1&gt;</div><svg class="abs" style="left:37.5px;top:274.5px" width="18" height="18" viewBox="0 0 18 18"><path d="M7.5 1h7.5a2 2 0 0 1 2 2v11.5a2 2 0 0 1-2 2h-12a2 2 0 0 1-2-2v-4a2 2 0 0 1 2-2h2.5v-5.5a2 2 0 0 1 2-2z" fill="none" stroke="#555" stroke-width="1.4"/><path d="M11.5 3.5v7.5l-7 2M11.5 11l3.5 2.5" fill="none" stroke="#555" stroke-width="1"/></svg><div class="row" style="left:66px;top:301.0px;letter-spacing:0.03px">Main Shaft &lt;1&gt;</div><svg class="abs" style="left:37.5px;top:307px" width="18" height="18" viewBox="0 0 18 18"><path d="M7.5 1h7.5a2 2 0 0 1 2 2v11.5a2 2 0 0 1-2 2h-12a2 2 0 0 1-2-2v-4a2 2 0 0 1 2-2h2.5v-5.5a2 2 0 0 1 2-2z" fill="none" stroke="#555" stroke-width="1.4"/><path d="M11.5 3.5v7.5l-7 2M11.5 11l3.5 2.5" fill="none" stroke="#555" stroke-width="1"/></svg><div class="row" style="left:66px;top:333.5px;letter-spacing:-0.11px">Pinion Gear &lt;2&gt;</div><svg class="abs" style="left:37.5px;top:339.5px" width="18" height="18" viewBox="0 0 18 18"><path d="M7.5 1h7.5a2 2 0 0 1 2 2v11.5a2 2 0 0 1-2 2h-12a2 2 0 0 1-2-2v-4a2 2 0 0 1 2-2h2.5v-5.5a2 2 0 0 1 2-2z" fill="none" stroke="#555" stroke-width="1.4"/><path d="M11.5 3.5v7.5l-7 2M11.5 11l3.5 2.5" fill="none" stroke="#555" stroke-width="1"/></svg><div class="row" style="left:66px;top:366.0px;letter-spacing:-0.09px">Ratchet Gear &lt;1&gt;</div><svg class="abs" style="left:37.5px;top:372px" width="18" height="18" viewBox="0 0 18 18"><path d="M7.5 1h7.5a2 2 0 0 1 2 2v11.5a2 2 0 0 1-2 2h-12a2 2 0 0 1-2-2v-4a2 2 0 0 1 2-2h2.5v-5.5a2 2 0 0 1 2-2z" fill="none" stroke="#555" stroke-width="1.4"/><path d="M11.5 3.5v7.5l-7 2M11.5 11l3.5 2.5" fill="none" stroke="#555" stroke-width="1"/></svg><div class="row" style="left:66px;top:398.5px;letter-spacing:-0.12px">Spool &lt;1&gt;</div><svg class="abs" style="left:37.5px;top:404.5px" width="18" height="18" viewBox="0 0 18 18"><path d="M2.5 1h10l4.5 4.5v9.5a1.5 1.5 0 0 1-1.5 1.5h-10l-4.5-4.5v-9.5a1.5 1.5 0 0 1 1.5-1.5z" fill="#fefefd" stroke="#777" stroke-width="1.3"/><rect x="2.5" y="2.5" width="10.5" height="10.5" fill="#9a9a9a"/><path d="M3 13.5l2.5 2M13.5 3l2 2.5" stroke="#999" stroke-width="1"/></svg><svg class="abs" style="left:13px;top:404.5px" width="14" height="16" viewBox="0 0 14 16"><path d="M4 2.5l5.5 5.5-5.5 5.5" fill="none" stroke="#484848" stroke-width="2.2"/></svg><div class="row" style="left:66px;top:431.0px;letter-spacing:0.19px">Crank Assembly &lt;1&gt;</div><svg class="abs" style="left:37.5px;top:437px" width="18" height="18" viewBox="0 0 18 18"><path d="M2.5 1h10l4.5 4.5v9.5a1.5 1.5 0 0 1-1.5 1.5h-10l-4.5-4.5v-9.5a1.5 1.5 0 0 1 1.5-1.5z" fill="#fefefd" stroke="#777" stroke-width="1.3"/><rect x="2.5" y="2.5" width="10.5" height="10.5" fill="#9a9a9a"/><path d="M3 13.5l2.5 2M13.5 3l2 2.5" stroke="#999" stroke-width="1"/></svg><svg class="abs" style="left:13px;top:437px" width="14" height="16" viewBox="0 0 14 16"><path d="M4 2.5l5.5 5.5-5.5 5.5" fill="none" stroke="#484848" stroke-width="2.2"/></svg><div class="row" style="left:37px;top:463.5px;letter-spacing:-0.02px">Items (2)</div><svg class="abs" style="left:12px;top:470.5px" width="16" height="14" viewBox="0 0 16 14"><path d="M2.5 4l5.5 5.5 5.5-5.5" fill="none" stroke="#484848" stroke-width="2.2"/></svg><div class="row" style="left:78px;top:496.0px;letter-spacing:0.02px">Packaging &lt;1&gt;</div><svg class="abs" style="left:50px;top:500px" width="22" height="22" viewBox="0 0 22 22"><path d="M2.5 7l5-4.5 11 3v9l-5 4-11-3.5z" fill="none" stroke="#333" stroke-width="1.3" stroke-linejoin="round"/><path d="M2.5 7l11 3.5 5-5M13.5 10.5v8" fill="none" stroke="#333" stroke-width="1.3"/><path d="M13.5 15.5l5-3.5v2.5l-5 4z" fill="#222"/></svg><div class="row" style="left:78px;top:528.5px;letter-spacing:-0.12px">Glue &lt;1&gt;</div><svg class="abs" style="left:50px;top:532.5px" width="22" height="22" viewBox="0 0 22 22"><path d="M2.5 7l5-4.5 11 3v9l-5 4-11-3.5z" fill="none" stroke="#333" stroke-width="1.3" stroke-linejoin="round"/><path d="M2.5 7l11 3.5 5-5M13.5 10.5v8" fill="none" stroke="#333" stroke-width="1.3"/><path d="M13.5 15.5l5-3.5v2.5l-5 4z" fill="#222"/></svg><div class="row" style="left:37px;top:561.0px;letter-spacing:-0.01px">Mate Features (12)</div><svg class="abs" style="left:12px;top:568px" width="16" height="14" viewBox="0 0 16 14"><path d="M2.5 4l5.5 5.5 5.5-5.5" fill="none" stroke="#484848" stroke-width="2.2"/></svg><div class="row dim" style="left:78px;top:593.5px;letter-spacing:0.05px">Revolute 3</div><svg class="abs" style="left:49px;top:596px" width="25" height="25" viewBox="0 0 25 25"><path d="M3.7 5V20A8.8 3.2 0 0 0 21.3 20V5" fill="none" stroke="#aaa" stroke-width="1.2"/><ellipse cx="12.5" cy="5" rx="8.8" ry="3.2" fill="none" stroke="#aaa" stroke-width="1.2"/><path d="M4.5 8C1.5 9.5 1.5 13 6.5 14.3M20.5 8C23.5 9.5 23.5 13 18.5 14.3" fill="none" stroke="#888" stroke-width="2"/><path d="M6.5 11.5l4.6 3.6-5 2.4zM18.5 11.5l-4.6 3.6 5 2.4z" fill="#888"/></svg><svg class="abs" style="left:26px;top:599.5px" width="14" height="16" viewBox="0 0 14 16"><path d="M4 2.5l5.5 5.5-5.5 5.5" fill="none" stroke="#484848" stroke-width="2.2"/></svg><div class="row dim" style="left:78px;top:626.0px;letter-spacing:0.10px">Slider 1</div><svg class="abs" style="left:49px;top:628px" width="25" height="25" viewBox="0 0 25 25"><path d="M4.5 9.5V20A8 3 0 0 0 20.5 20V9.5" fill="none" stroke="#aaa" stroke-width="1.2"/><ellipse cx="12.5" cy="9.5" rx="8" ry="3" fill="none" stroke="#aaa" stroke-width="1.2"/><path d="M2 8v13M23 8v13" stroke="#888" stroke-width="2"/><path d="M12.5 11.5V5" stroke="#888" stroke-width="2.2"/><path d="M8.7 6.5l3.8-5 3.8 5z" fill="#888"/></svg><svg class="abs" style="left:26px;top:632px" width="14" height="16" viewBox="0 0 14 16"><path d="M4 2.5l5.5 5.5-5.5 5.5" fill="none" stroke="#484848" stroke-width="2.2"/></svg><div class="row dim" style="left:78px;top:658.5px;letter-spacing:-0.16px">Body</div><svg class="abs" style="left:49.5px;top:661.5px" width="24" height="23" viewBox="0 0 24 23"><rect x="2.5" y="2.5" width="19" height="18" fill="none" stroke="#777" stroke-width="1.4" stroke-dasharray="3.5 2 1.2 2"/><rect x="7" y="6.5" width="7.5" height="7.5" fill="#fefefd" stroke="#888" stroke-width="1.3"/><rect x="10.5" y="9.5" width="7.5" height="7.5" fill="none" stroke="#888" stroke-width="1.3"/><circle cx="2.5" cy="2.5" r="1.5" fill="#fefefd" stroke="#777" stroke-width="1"/><circle cx="2.5" cy="20.5" r="1.5" fill="#fefefd" stroke="#777" stroke-width="1"/><circle cx="21.5" cy="2.5" r="1.5" fill="#fefefd" stroke="#777" stroke-width="1"/><circle cx="21.5" cy="20.5" r="1.5" fill="#fefefd" stroke="#777" stroke-width="1"/></svg><div class="row dim" style="left:78px;top:691.0px;letter-spacing:0.10px">Spindle</div><svg class="abs" style="left:49.5px;top:694px" width="24" height="23" viewBox="0 0 24 23"><rect x="2.5" y="2.5" width="19" height="18" fill="none" stroke="#777" stroke-width="1.4" stroke-dasharray="3.5 2 1.2 2"/><rect x="7" y="6.5" width="7.5" height="7.5" fill="#fefefd" stroke="#888" stroke-width="1.3"/><rect x="10.5" y="9.5" width="7.5" height="7.5" fill="none" stroke="#888" stroke-width="1.3"/><circle cx="2.5" cy="2.5" r="1.5" fill="#fefefd" stroke="#777" stroke-width="1"/><circle cx="2.5" cy="20.5" r="1.5" fill="#fefefd" stroke="#777" stroke-width="1"/><circle cx="21.5" cy="2.5" r="1.5" fill="#fefefd" stroke="#777" stroke-width="1"/><circle cx="21.5" cy="20.5" r="1.5" fill="#fefefd" stroke="#777" stroke-width="1"/></svg><div class="row dim" style="left:78px;top:723.5px;letter-spacing:-0.12px">Fastened 1</div><svg class="abs" style="left:49px;top:725.5px" width="25" height="25" viewBox="0 0 25 25"><path d="M3.7 5V20A8.8 3.2 0 0 0 21.3 20V5" fill="none" stroke="#aaa" stroke-width="1.2"/><ellipse cx="12.5" cy="5" rx="8.8" ry="3.2" fill="none" stroke="#aaa" stroke-width="1.2"/><path d="M3.7 11.5v8.5a8.8 3.2 0 0 0 17.6 0v-8.5a8.8 3 0 0 1-4.6 2.6v4.2h-8.4v-4.2a8.8 3 0 0 1-4.6-2.6z" fill="#b8b8b8" stroke="#999" stroke-width="1"/></svg><svg class="abs" style="left:26px;top:729.5px" width="14" height="16" viewBox="0 0 14 16"><path d="M4 2.5l5.5 5.5-5.5 5.5" fill="none" stroke="#484848" stroke-width="2.2"/></svg><svg class="abs" style="left:192px;top:79.5px" width="18" height="18" viewBox="0 0 18 18"><path d="M1 2h16" stroke="#222" stroke-width="2.5"/><path d="M1 7h16" stroke="#222" stroke-width="2"/><path d="M1.5 16l5-7M6 16l5-7M10.5 16l5-7M15 16l2.5-3.5" stroke="#222" stroke-width="2"/></svg></div>
<div id="tabs"></div><div id="tabitems"><svg class="abs" style="left:9px;top:8px" width="24" height="22" viewBox="0 0 24 22"><circle cx="8.5" cy="11.5" r="4.8" fill="none" stroke="#555" stroke-width="1.8"/><path d="M12 15l4 4.5" stroke="#555" stroke-width="2.2"/><path d="M2 2.5h20M15.5 9.5h6.5M17 14h5" stroke="#555" stroke-width="1.8"/></svg><svg class="abs" style="left:57px;top:8px" width="20" height="22" viewBox="0 0 20 22"><path d="M10 2v18M1 11h18" stroke="#444" stroke-width="2.8"/></svg><div class="tab act" style="left:97px;width:221px"><svg class="abs" style="left:11px;top:5px" width="24" height="24" viewBox="0 0 24 24"><path d="M3 1.5h13.5l5 5v13a1.5 1.5 0 0 1-1.5 1.5h-13.5l-5-5v-13a1.5 1.5 0 0 1 1.5-1.5z" fill="#fdfdfd" stroke="#333" stroke-width="1.6" stroke-linejoin="round"/><rect x="3.5" y="3.5" width="13" height="13" fill="#8c8c8c"/><path d="M16.5 3.5l3.5 3.5M3.5 16.5l3.5 3.5M16.5 16.5v-13M16.5 16.5h-13" fill="none" stroke="#777" stroke-width="1"/><path d="M16.5 16.5l4 4" stroke="#555" stroke-width="1"/></svg><span style="left:39px;letter-spacing:0.10px">Fishing Reel Assembly</span></div><div class="tab" style="left:322px;width:124px"><svg class="abs" style="left:11px;top:5px" width="24" height="24" viewBox="0 0 24 24"><rect x="1.5" y="2" width="20" height="18" rx="1.5" fill="#fdfdfd" stroke="#333" stroke-width="1.6"/><path d="M13 20v-6h8.5" fill="none" stroke="#333" stroke-width="1.6"/></svg><span style="left:39px;letter-spacing:0.06px">Drawing 2</span></div><div class="tab" style="left:449px;width:125px"><svg class="abs" style="left:11px;top:5px" width="24" height="24" viewBox="0 0 24 24"><rect x="1.5" y="2" width="20" height="18" rx="1.5" fill="#fdfdfd" stroke="#333" stroke-width="1.6"/><path d="M13 20v-6h8.5" fill="none" stroke="#333" stroke-width="1.6"/></svg><span style="left:39px;letter-spacing:0.18px">Drawing 3</span></div><div class="tab" style="left:577px;width:120px"><svg class="abs" style="left:11px;top:5px" width="24" height="24" viewBox="0 0 24 24"><path d="M1.5 4.5a1.5 1.5 0 0 1 1.5-1.5h6l2 3h10a1.5 1.5 0 0 1 1.5 1.5v11a1.5 1.5 0 0 1-1.5 1.5h-18a1.5 1.5 0 0 1-1.5-1.5z" fill="none" stroke="#555" stroke-width="1.4"/></svg><span style="left:40px;letter-spacing:0.16px">Drawings</span></div><div class="tab" style="left:700px;width:173px"><svg class="abs" style="left:11px;top:5px" width="24" height="24" viewBox="0 0 24 24"><path d="M3 1.5h13.5l5 5v13a1.5 1.5 0 0 1-1.5 1.5h-13.5l-5-5v-13a1.5 1.5 0 0 1 1.5-1.5z" fill="#fdfdfd" stroke="#333" stroke-width="1.6" stroke-linejoin="round"/><rect x="3.5" y="3.5" width="13" height="13" fill="#8c8c8c"/><path d="M16.5 3.5l3.5 3.5M3.5 16.5l3.5 3.5M16.5 16.5v-13M16.5 16.5h-13" fill="none" stroke="#777" stroke-width="1"/><path d="M16.5 16.5l4 4" stroke="#555" stroke-width="1"/></svg><span style="left:39px;letter-spacing:0.25px">Crank Assembly</span></div><div class="tab" style="left:876px;width:250px"><svg class="abs" style="left:11px;top:5px" width="24" height="24" viewBox="0 0 24 24"><path d="M4.20577 7.5A9 9 0 0 1 14.1773 3.26734" fill="none" stroke="#4caf50" stroke-width="5"/><path d="M16.5 4.20577A9 9 0 0 1 20.7327 14.1773" fill="none" stroke="#2f6fc0" stroke-width="5"/><path d="M19.7942 16.5A9 9 0 0 1 9.8227 20.7327" fill="none" stroke="#f0a020" stroke-width="5"/><path d="M7.5 19.7942A9 9 0 0 1 3.26734 9.8227" fill="none" stroke="#e8503a" stroke-width="5"/></svg><span style="left:40px;letter-spacing:-0.11px">BOM_Fishing Reel - train...</span></div><div class="tab" style="left:1129px;width:143px"><svg class="abs" style="left:11px;top:5px" width="24" height="24" viewBox="0 0 24 24"><path d="M1.5 4.5a1.5 1.5 0 0 1 1.5-1.5h6l2 3h10a1.5 1.5 0 0 1 1.5 1.5v11a1.5 1.5 0 0 1-1.5 1.5h-18a1.5 1.5 0 0 1-1.5-1.5z" fill="none" stroke="#555" stroke-width="1.4"/></svg><span style="left:40px;letter-spacing:0.05px">Screenshots</span></div><div class="tab" style="left:1275px;width:91px"><svg class="abs" style="left:10px;top:5px" width="24" height="24" viewBox="0 0 24 24"><path d="M2.5 8l4-4h4v15l-4 3.5h-4z" fill="#fdfdfd" stroke="#333" stroke-width="1.4"/><path d="M6.5 8v14.5M2.5 8h4l4-4" fill="none" stroke="#333" stroke-width="1.2"/><path d="M12.5 5.5l4-4h5.5v17l-4 4h-5.5z" fill="#fdfdfd" stroke="#333" stroke-width="1.4"/><path d="M18 5.5v17M12.5 5.5h5.5l4-4" fill="none" stroke="#333" stroke-width="1.2"/></svg><span style="left:40px;letter-spacing:-0.12px">Spool</span></div><div class="tab" style="left:1369px;width:173px"><svg class="abs" style="left:11px;top:5px" width="24" height="24" viewBox="0 0 24 24"><path d="M3 1.5h13.5l5 5v13a1.5 1.5 0 0 1-1.5 1.5h-13.5l-5-5v-13a1.5 1.5 0 0 1 1.5-1.5z" fill="#fdfdfd" stroke="#333" stroke-width="1.6" stroke-linejoin="round"/><rect x="3.5" y="3.5" width="13" height="13" fill="#8c8c8c"/><path d="M16.5 3.5l3.5 3.5M3.5 16.5l3.5 3.5M16.5 16.5v-13M16.5 16.5h-13" fill="none" stroke="#777" stroke-width="1"/><path d="M16.5 16.5l4 4" stroke="#555" stroke-width="1"/></svg><span style="left:40px;letter-spacing:0.00px">Exploded Assembly</span></div><svg class="abs" style="left:1546px;top:8px" width="16" height="22" viewBox="0 0 16 22"><path d="M12 2l-8 9 8 9" fill="none" stroke="#888" stroke-width="2.6"/></svg><svg class="abs" style="left:1576px;top:8px" width="16" height="22" viewBox="0 0 16 22"><path d="M4 2l8 9-8 9" fill="none" stroke="#444" stroke-width="2.6"/></svg></div>
</body>
</html>
